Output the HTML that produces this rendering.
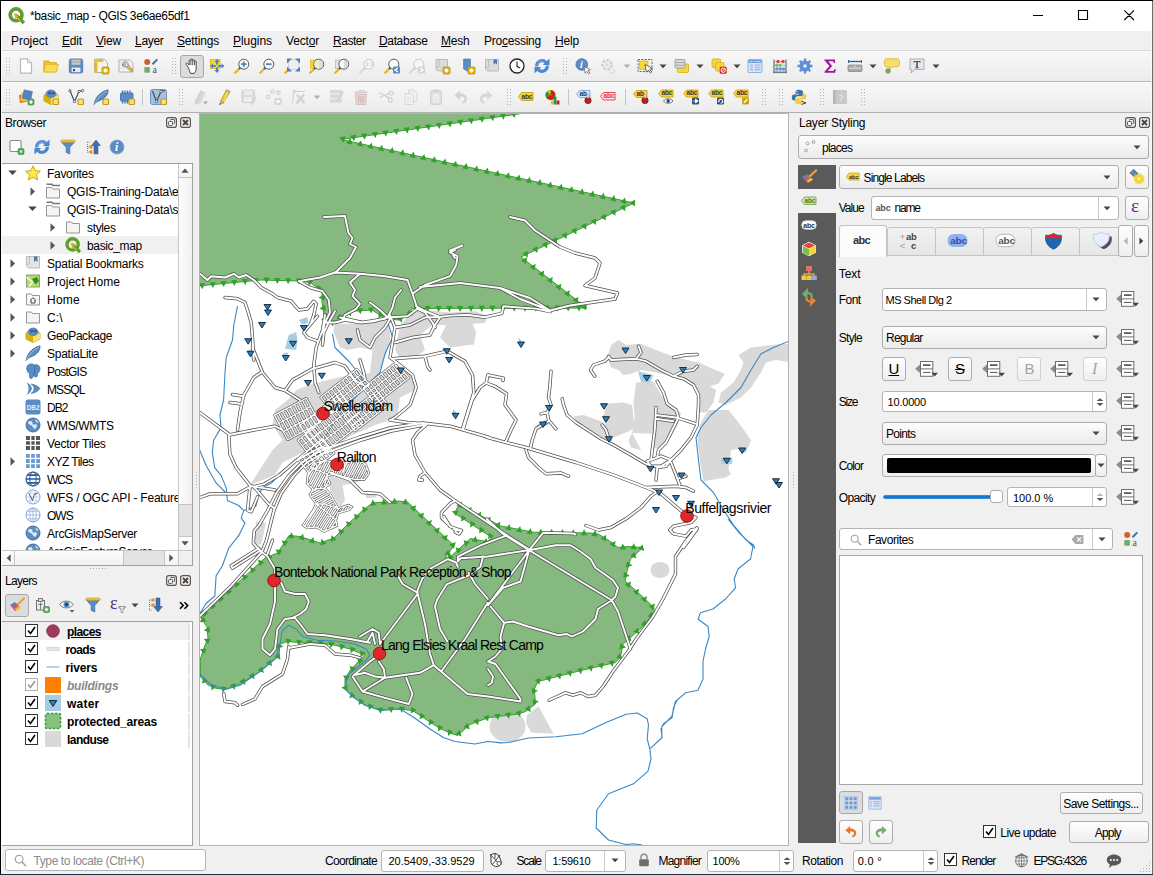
<!DOCTYPE html>
<html><head><meta charset="utf-8"><title>QGIS</title>
<style>
html,body{margin:0;padding:0}
body{width:1153px;height:875px;position:relative;overflow:hidden;background:#f0f0f0;font-family:"Liberation Sans",sans-serif;font-size:12px;color:#000}
div,svg{position:absolute;box-sizing:border-box}
.t{white-space:nowrap;line-height:16px;height:16px;font-size:12px;letter-spacing:-0.2px}
.i{overflow:visible}
u{text-decoration:underline;text-underline-offset:1px;text-decoration-skip-ink:none}
.grip{width:5px;background-image:radial-gradient(circle,#b0b0b0 0.7px,transparent 1px);background-size:3px 3px;background-position:0 0}
.btn{border:1px solid #adadad;border-radius:3px;background:linear-gradient(#fefefe,#eeeeee)}
.cmb{border:1px solid #adadad;border-radius:3px;background:linear-gradient(#fdfdfd,#ebebeb)}
.edit{border:1px solid #b4b4b4;border-radius:3px;background:#fff}
.cb{border:1px solid #333;background:#fff;width:13px;height:13px}

</style></head>
<body>
<div class="" style="left:0px;top:0px;width:1153px;height:31px;background:#fff"></div>
<svg class="i" style="left:8.0px;top:6.5px" width="17" height="17" viewBox="0 0 16 16"><circle cx="7.6" cy="7.4" r="5.6" fill="none" stroke="#5aa02c" stroke-width="3.4"/><path d="M8 8L15 15" stroke="#5aa02c" stroke-width="3.2"/><path d="M7 7l3.2 1.2L8.8 9.4l3 3-1 1-3-3L6.6 12z" fill="#f0a51f"/><circle cx="7.2" cy="7.2" r="1.6" fill="#ee7913" opacity=".6"/></svg>
<div class="t" style="left:30px;top:7.5px;;letter-spacing:-0.38px;">*basic_map - QGIS 3e6ae65df1</div>
<svg class="i" style="left:1020px;top:0" width="133" height="31" viewBox="0 0 133 31"><path d="M13 15.5h10M58.5 10.5h9v9h-9zM104.3 10.300l9.700 9.700M114 10.300l-9.700 9.700" stroke="#000" stroke-width="1.100" fill="none"/></svg>
<div class="" style="left:0px;top:31px;width:1153px;height:20px;background:#f0f0f0;border-bottom:1px solid #d9d9d9"></div>
<div class="t" style="left:11px;top:33px;;letter-spacing:-0.05px;">Pro<u>j</u>ect</div>
<div class="t" style="left:62px;top:33px;;letter-spacing:-0.17px;"><u>E</u>dit</div>
<div class="t" style="left:96px;top:33px;;letter-spacing:-0.20px;"><u>V</u>iew</div>
<div class="t" style="left:135px;top:33px;;letter-spacing:-0.30px;"><u>L</u>ayer</div>
<div class="t" style="left:177px;top:33px;;letter-spacing:-0.17px;"><u>S</u>ettings</div>
<div class="t" style="left:233px;top:33px;;letter-spacing:-0.05px;"><u>P</u>lugins</div>
<div class="t" style="left:286px;top:33px;;letter-spacing:-0.17px;">Vect<u>o</u>r</div>
<div class="t" style="left:333px;top:33px;;letter-spacing:-0.47px;"><u>R</u>aster</div>
<div class="t" style="left:379px;top:33px;;letter-spacing:-0.36px;"><u>D</u>atabase</div>
<div class="t" style="left:441px;top:33px;;letter-spacing:-0.21px;"><u>M</u>esh</div>
<div class="t" style="left:484px;top:33px;;letter-spacing:-0.24px;">Pro<u>c</u>essing</div>
<div class="t" style="left:555px;top:33px;;letter-spacing:-0.17px;"><u>H</u>elp</div>
<div class="" style="left:0px;top:51px;width:1153px;height:31px;background:linear-gradient(#f7f7f7,#ececec);border-top:1px solid #fbfbfb;border-bottom:1px solid #b8b8b8"></div>
<div class="" style="left:0px;top:82px;width:1153px;height:31px;background:linear-gradient(#f7f7f7,#ececec);border-top:1px solid #fbfbfb;border-bottom:1px solid #b0b0b0"></div>
<svg class="i" style="left:6px;top:58px" width="4" height="16" viewBox="0 0 4 16" fill="#b2b2b2"><rect x="0" y="0" width="1" height="1"/><rect x="0" y="3" width="1" height="1"/><rect x="0" y="6" width="1" height="1"/><rect x="0" y="9" width="1" height="1"/><rect x="0" y="12" width="1" height="1"/><rect x="0" y="15" width="1" height="1"/><rect x="3" y="0" width="1" height="1"/><rect x="3" y="3" width="1" height="1"/><rect x="3" y="6" width="1" height="1"/><rect x="3" y="9" width="1" height="1"/><rect x="3" y="12" width="1" height="1"/><rect x="3" y="15" width="1" height="1"/></svg>
<svg class="i" style="left:18.0px;top:58.0px" width="16" height="16" viewBox="0 0 16 16"><path d="M2.5 .8h7l4 4v10.4h-11z" fill="#fff" stroke="#b9b9b9" stroke-width="1.2" stroke-linejoin="round"/><path d="M9.5 .8v4h4" fill="#eee" stroke="#b9b9b9" stroke-width="1"/></svg>
<svg class="i" style="left:43.0px;top:58.0px" width="16" height="16" viewBox="0 0 16 16"><path d="M.8 3h5l1.2 1.6h6.4v9.2H.8z" fill="#efc52b" stroke="#d8ab18" stroke-width=".9"/><path d="M2.8 6.4h12.6l-2 7.6H.9z" fill="#fbdc5a" stroke="#e2b82a" stroke-width=".9" stroke-linejoin="round"/></svg>
<svg class="i" style="left:68.0px;top:58.0px" width="16" height="16" viewBox="0 0 16 16"><rect x="1.3" y="1" width="13.4" height="14" rx="1.8" fill="#5b8cc4" stroke="#4a7ab5" stroke-width=".9"/><rect x="3.6" y="1.6" width="8.8" height="5.2" fill="#c8c8c8"/><rect x="3.6" y="3.4" width="8.8" height="1.2" fill="#a9a9a9"/><rect x="3.6" y="9.6" width="8.8" height="4.6" fill="#ececec"/><rect x="5" y="11" width="2" height="2.2" fill="#2e4a73"/></svg>
<svg class="i" style="left:93.0px;top:58.0px" width="16" height="16" viewBox="0 0 16 16"><path d="M1.5 1h9.5l3.5 3.5V14.5h-13z" fill="#f4f4f4" stroke="#b0b0b0" stroke-width="1"/><path d="M1.5 1h3v13.5h-3z" fill="#eec52f"/><path d="M1.5 1h9v3h-9z" fill="#eec52f"/><path d="M2 6h1.5M2 8h1.5M2 10h1.5M2 12h1.5M6 1.5v1.5M8 1.5v1.5" stroke="#b08c0f" stroke-width=".6"/><rect x="9" y="9" width="7" height="7" rx="1" fill="#e3b51b" stroke="#b98f0c" stroke-width=".8"/><path d="M12.5 10.3v4.4M10.3 12.5h4.4M11 11l3 3M14 11l-3 3" stroke="#fff" stroke-width=".9"/></svg>
<svg class="i" style="left:118.0px;top:58.0px" width="16" height="16" viewBox="0 0 16 16"><path d="M1 2h11l3 3v9H1z" fill="#f2f4fa" stroke="#b0b0b0" stroke-width="1"/><rect x="2.5" y="4" width="9" height="7.5" fill="#dbe4f5"/><path d="M5.5 4.5c2-1.5 4.5-.5 4.3 2l5 5.5-1.6 1.8-5.2-5.4c-2 .6-3.8-.6-3.6-2.6l2 1.6 1.4-1.2z" fill="#e6c04a" stroke="#8a7a46" stroke-width=".7"/><path d="M5.5 4.5c2-1.5 4.5-.5 4.3 2l.8.8-1.8 1.6-.8-.5c-2 .6-3.8-.6-3.6-2.6l2 1.6 1.4-1.2z" fill="#e9e9e9" stroke="#777" stroke-width=".7"/></svg>
<svg class="i" style="left:143.0px;top:58.0px" width="16" height="16" viewBox="0 0 16 16"><circle cx="4.2" cy="4" r="3" fill="#d35f2f"/><rect x="1.3" y="9" width="5.6" height="5.8" rx=".8" fill="#6fae6c"/><path d="M9.5 6.2L14.3 1.4" stroke="#3c6fad" stroke-width="2"/><text x="9.6" y="14.6" font-family="Liberation Serif" font-size="10" fill="#555">a</text></svg>
<svg class="i" style="left:172px;top:58px" width="4" height="16" viewBox="0 0 4 16" fill="#b2b2b2"><rect x="0" y="0" width="1" height="1"/><rect x="0" y="3" width="1" height="1"/><rect x="0" y="6" width="1" height="1"/><rect x="0" y="9" width="1" height="1"/><rect x="0" y="12" width="1" height="1"/><rect x="0" y="15" width="1" height="1"/><rect x="3" y="0" width="1" height="1"/><rect x="3" y="3" width="1" height="1"/><rect x="3" y="6" width="1" height="1"/><rect x="3" y="9" width="1" height="1"/><rect x="3" y="12" width="1" height="1"/><rect x="3" y="15" width="1" height="1"/></svg>
<div class="" style="left:180px;top:55px;width:24px;height:23px;border:1px solid #a8a8a8;border-radius:3px;background:#dcdcdc"></div>
<svg class="i" style="left:184.0px;top:58.0px" width="16" height="16" viewBox="0 0 16 16"><path d="M4.2 9.2L2.2 6.6c-.8-1 .5-2 1.4-1.2l1.6 1.6V2.6c0-1.1 1.7-1.1 1.7 0V1.8c0-1.1 1.8-1.1 1.8 0v.9c0-1.1 1.8-1.1 1.8 0v1c0-1 1.7-1 1.7.1v6.4c0 3-1.2 4.6-2.2 5.2H6.6c-.8-1.8-1.6-4-2.4-6.2z" fill="#fff" stroke="#333" stroke-width=".9" stroke-linejoin="round"/><path d="M6.9 2.6v4.6M8.7 2.7v4.5M10.5 3.7v3.5" stroke="#333" stroke-width=".8"/></svg>
<svg class="i" style="left:209.0px;top:58.0px" width="16" height="16" viewBox="0 0 16 16"><rect x="1.5" y="1.5" width="9.5" height="9" fill="#f5d63d" stroke="#d6b41f" stroke-width=".8"/><path d="M8 1l2.6 3H5.4zM8 15l2.6-3H5.4zM1 8l3-2.6v5.2zM15.5 8l-3-2.6v5.2z" fill="#4f83c2"/><path d="M8 4v8M4 8h8.5" stroke="#4f83c2" stroke-width="2"/><circle cx="8" cy="8" r="1.4" fill="#f5d63d"/></svg>
<svg class="i" style="left:234.0px;top:58.0px" width="16" height="16" viewBox="0 0 16 16"><path d="M1.2 14.8L6 10" stroke="#e9b320" stroke-width="2.2" stroke-linecap="round"/><path d="M5 11L6.6 9.4" stroke="#555" stroke-width="2" /><circle cx="9.8" cy="6.2" r="5" fill="#fdfdfd" stroke="#555" stroke-width="1"/><path d="M9.8 3.4v5.6M7 6.2h5.6" stroke="#4a82c3" stroke-width="1.8"/></svg>
<svg class="i" style="left:259.0px;top:58.0px" width="16" height="16" viewBox="0 0 16 16"><path d="M1.2 14.8L6 10" stroke="#e9b320" stroke-width="2.2" stroke-linecap="round"/><path d="M5 11L6.6 9.4" stroke="#555" stroke-width="2" /><circle cx="9.8" cy="6.2" r="5" fill="#fdfdfd" stroke="#555" stroke-width="1"/><path d="M7 6.2h5.6" stroke="#4a82c3" stroke-width="1.9"/></svg>
<svg class="i" style="left:284.0px;top:58.0px" width="16" height="16" viewBox="0 0 16 16"><path d="M1.2 14.8L6 10" stroke="#e9b320" stroke-width="2.2" stroke-linecap="round"/><path d="M5 11L6.6 9.4" stroke="#555" stroke-width="2"/><rect x="4.5" y="1.5" width="10" height="10" fill="#eee" stroke="#bbb" stroke-width=".6"/><path d="M3 .5h5L3 5.5zM16 .5h-5l5 5zM16 13.5h-5l5-5zM3 13.5v-5l5 5z" fill="#4a82c3"/></svg>
<svg class="i" style="left:309.0px;top:58.0px" width="16" height="16" viewBox="0 0 16 16"><rect x="1.5" y="2" width="7" height="8.5" fill="#f5d63d" stroke="#d6b41f" stroke-width=".6"/><path d="M1.2 14.8L6 10" stroke="#e9b320" stroke-width="2.2" stroke-linecap="round"/><path d="M5 11L6.6 9.4" stroke="#555" stroke-width="2" /><circle cx="9.8" cy="6.2" r="5" fill="#fdfdfd" stroke="#555" stroke-width="1"/><path d="M9.8 1.7a4.5 4.5 0 0 1 0 9z" fill="#cfcfcf" opacity=".7"/><path d="M9.8 1.7a4.5 4.5 0 0 0 0 9z" fill="#f3ecc4"/></svg>
<svg class="i" style="left:334.0px;top:58.0px" width="16" height="16" viewBox="0 0 16 16"><rect x="1.5" y="2" width="6" height="8.5" fill="#e6e6e6" stroke="#aaa" stroke-width=".6"/><path d="M1.2 14.8L6 10" stroke="#e9b320" stroke-width="2.2" stroke-linecap="round"/><path d="M5 11L6.6 9.4" stroke="#555" stroke-width="2" /><circle cx="9.8" cy="6.2" r="5" fill="#fdfdfd" stroke="#555" stroke-width="1"/><path d="M9.8 1.7a4.5 4.5 0 0 1 0 9z" fill="#cfcfcf" opacity=".8"/></svg>
<svg class="i" style="left:359.0px;top:58.0px" width="16" height="16" viewBox="0 0 16 16"><path d="M1.2 14.8L6 10" stroke="#d8d8d8" stroke-width="2.2" stroke-linecap="round"/><path d="M5 11L6.6 9.4" stroke="#c9c9c9" stroke-width="2" /><circle cx="9.8" cy="6.2" r="5" fill="#f6f6f6" stroke="#c9c9c9" stroke-width="1"/><text x="6.6" y="8.2" font-family="Liberation Sans" font-size="5.5" fill="#ccc" font-weight="bold">1:1</text></svg>
<svg class="i" style="left:384.0px;top:58.0px" width="16" height="16" viewBox="0 0 16 16"><path d="M1.2 14.8L6 10" stroke="#e9b320" stroke-width="2.2" stroke-linecap="round"/><path d="M5 11L6.6 9.4" stroke="#555" stroke-width="2" /><circle cx="9.8" cy="6.2" r="5" fill="#fdfdfd" stroke="#555" stroke-width="1"/><rect x="9" y="8.5" width="7" height="7" rx="1" fill="#5b8cc4"/><path d="M14 10l-3 2 3 2" stroke="#fff" stroke-width="1.3" fill="none"/></svg>
<svg class="i" style="left:409.0px;top:58.0px" width="16" height="16" viewBox="0 0 16 16"><path d="M1.2 14.8L6 10" stroke="#d8d8d8" stroke-width="2.2" stroke-linecap="round"/><path d="M5 11L6.6 9.4" stroke="#c9c9c9" stroke-width="2" /><circle cx="9.8" cy="6.2" r="5" fill="#f6f6f6" stroke="#c9c9c9" stroke-width="1"/><rect x="9" y="8.5" width="7" height="7" rx="1" fill="#d4d4d4"/><path d="M11 10l3 2-3 2" stroke="#fff" stroke-width="1.3" fill="none"/></svg>
<svg class="i" style="left:434.0px;top:58.0px" width="16" height="16" viewBox="0 0 16 16"><path d="M2 1.5h11.5V13H5.5c-2 0-3.5-.8-3.5-2.5z" fill="#dcdcdc" stroke="#b4b4b4" stroke-width=".9"/><path d="M2 10.5c.3-1.2 1.5-1.5 3-1.5V1.5" fill="none" stroke="#b4b4b4" stroke-width=".8"/><rect x="9" y="9" width="7" height="7" rx="1" fill="#e3b51b" stroke="#b98f0c" stroke-width=".8"/><path d="M12.5 10.3v4.4M10.3 12.5h4.4M11 11l3 3M14 11l-3 3" stroke="#fff" stroke-width=".9"/></svg>
<svg class="i" style="left:459.0px;top:58.0px" width="16" height="16" viewBox="0 0 16 16"><path d="M4.5 1h7V11L9 13.5 4.5 11z" fill="#5b8cc4" stroke="#4a7ab5" stroke-width=".6"/><rect x="9" y="9" width="7" height="7" rx="1" fill="#e3b51b" stroke="#b98f0c" stroke-width=".8"/><path d="M12.5 10.3v4.4M10.3 12.5h4.4M11 11l3 3M14 11l-3 3" stroke="#fff" stroke-width=".9"/></svg>
<svg class="i" style="left:484.0px;top:58.0px" width="16" height="16" viewBox="0 0 16 16"><path d="M1.5 1.5h13V13H5c-2 0-3.5-.8-3.5-2.5z" fill="#dcdcdc" stroke="#b4b4b4" stroke-width=".9"/><path d="M1.5 10.5c.3-1.2 1.5-1.5 3-1.5V1.5" fill="none" stroke="#b4b4b4" stroke-width=".8"/><path d="M9.5 1.5h3.5v5l-1.75-1.4-1.75 1.4z" fill="#4a7ab5"/></svg>
<svg class="i" style="left:509.0px;top:58.0px" width="16" height="16" viewBox="0 0 16 16"><circle cx="8" cy="8" r="7" fill="#fff" stroke="#222" stroke-width="1.3"/><path d="M8 3.5V8.3l3 1.6" stroke="#222" stroke-width="1.1" fill="none"/></svg>
<svg class="i" style="left:534.0px;top:58.0px" width="16" height="16" viewBox="0 0 16 16"><path d="M2.700 8.300A5.300 5.300 0 0 1 11.800 4.300" fill="none" stroke="#4a86d0" stroke-width="3.200"/><path d="M8.800 6.900h6.700V.6z" fill="#4a86d0"/><path d="M13.300 7.700A5.300 5.300 0 0 1 4.200 11.700" fill="none" stroke="#4a86d0" stroke-width="3.200"/><path d="M7.200 9.100H.5v6.300z" fill="#4a86d0"/><path d="M3.500 7A4.500 4.500 0 0 1 10.500 3.800" fill="none" stroke="#8fb8ea" stroke-width=".8"/></svg>
<svg class="i" style="left:563px;top:58px" width="4" height="16" viewBox="0 0 4 16" fill="#b2b2b2"><rect x="0" y="0" width="1" height="1"/><rect x="0" y="3" width="1" height="1"/><rect x="0" y="6" width="1" height="1"/><rect x="0" y="9" width="1" height="1"/><rect x="0" y="12" width="1" height="1"/><rect x="0" y="15" width="1" height="1"/><rect x="3" y="0" width="1" height="1"/><rect x="3" y="3" width="1" height="1"/><rect x="3" y="6" width="1" height="1"/><rect x="3" y="9" width="1" height="1"/><rect x="3" y="12" width="1" height="1"/><rect x="3" y="15" width="1" height="1"/></svg>
<svg class="i" style="left:575.0px;top:58.0px" width="16" height="16" viewBox="0 0 16 16"><circle cx="6.8" cy="6.5" r="5.8" fill="#5b8cc4" stroke="#3f6eaa" stroke-width=".8"/><text x="5" y="10" font-family="Liberation Serif" font-style="italic" font-weight="bold" font-size="10" fill="#fff">i</text><path d="M9 8.5l6.5 3.2-2.4.9 1.8 2.4-1.2.9-1.8-2.5-1.7 1.8z" fill="#fff" stroke="#555" stroke-width=".7"/></svg>
<svg class="i" style="left:600.0px;top:58.0px" width="16" height="16" viewBox="0 0 16 16"><circle cx="7" cy="6.8" r="4.5" fill="none" stroke="#d0d0d0" stroke-width="2.6" stroke-dasharray="2.6 1.4"/><path d="M5.6 4.6v4.4l3.6-2.2z" fill="#d6d6d6"/><path d="M9.5 9.5l6 3-2.3.8 1.6 2.2-1 .8-1.7-2.3-1.5 1.6z" fill="#f4f4f4" stroke="#d0d0d0" stroke-width=".7"/></svg>
<svg class="i" style="left:637.0px;top:58.0px" width="16" height="16" viewBox="0 0 16 16"><rect x="1" y="1.5" width="14" height="12" fill="none" stroke="#666" stroke-width="1" stroke-dasharray="2 1.3"/><rect x="2.5" y="3" width="8.5" height="8.5" fill="#f5d63d" stroke="#d6b41f" stroke-width=".7"/><path d="M8 6.5l7.5 3.8-2.8 1 2 2.8-1.3 1-2-2.9-2 2z" fill="#fff" stroke="#444" stroke-width=".8"/></svg>
<svg class="i" style="left:674.0px;top:58.0px" width="16" height="16" viewBox="0 0 16 16"><rect x="3.5" y="6" width="11" height="8.5" rx="1" fill="#f5d63d" stroke="#d6b41f" stroke-width=".9"/><rect x="1" y="1.5" width="10" height="8.5" rx="1" fill="#d9d9d9" stroke="#9c9c9c" stroke-width=".9"/><path d="M1.5 4.5h9M1.5 7.2h9" stroke="#9c9c9c" stroke-width=".8"/></svg>
<svg class="i" style="left:711.0px;top:58.0px" width="16" height="16" viewBox="0 0 16 16"><rect x="1" y="1" width="8.5" height="8.5" rx="1" fill="#f5d63d" stroke="#d6b41f" stroke-width=".9"/><rect x="4.5" y="4.5" width="8.5" height="8.5" rx="1" fill="#f5d63d" stroke="#d6b41f" stroke-width=".9"/><rect x="8.7" y="8.7" width="7" height="7" rx="1.2" fill="#d9281e"/><circle cx="12.2" cy="12.2" r="2.2" fill="none" stroke="#fff" stroke-width="1"/><path d="M10.6 13.8l3.2-3.2" stroke="#fff" stroke-width="1"/></svg>
<svg class="i" style="left:747.0px;top:58.0px" width="16" height="16" viewBox="0 0 16 16"><rect x="1" y="1.5" width="14" height="13" rx="1" fill="#dbe7f7" stroke="#8fb1dc" stroke-width="1"/><rect x="1.5" y="2" width="13" height="3" fill="#6f9fd8"/><path d="M3 7h3M7.5 7h6M3 9.3h3M7.5 9.3h6M3 11.6h3M7.5 11.6h6" stroke="#8fb1dc" stroke-width="1.1"/><path d="M3 3.5h3M7.5 3.5h6" stroke="#c9dcf3" stroke-width=".9"/></svg>
<svg class="i" style="left:772.0px;top:58.0px" width="16" height="16" viewBox="0 0 16 16"><path d="M2 1.5V14M14 1.5V14" stroke="#777" stroke-width="1.3"/><path d="M1 14.3h14" stroke="#777" stroke-width="1.6"/><path d="M2 3.5h12M2 7.3h12M2 11h12" stroke="#999" stroke-width=".7"/><circle cx="6" cy="3.5" r="1.7" fill="#e04038"/><circle cx="11" cy="3.5" r="1.7" fill="#e04038"/><circle cx="4.8" cy="7.3" r="1.7" fill="#77c06c"/><circle cx="8" cy="7.3" r="1.7" fill="#77c06c"/><circle cx="5" cy="11" r="1.7" fill="#5b9bd5"/><circle cx="8.3" cy="11" r="1.7" fill="#5b9bd5"/><circle cx="11.5" cy="11" r="1.7" fill="#5b9bd5"/></svg>
<svg class="i" style="left:797.0px;top:58.0px" width="16" height="16" viewBox="0 0 16 16"><circle cx="8" cy="8" r="4" fill="none" stroke="#5b8fd6" stroke-width="3"/><path d="M8 .5v15M.5 8h15M2.7 2.7l10.6 10.6M13.3 2.7L2.7 13.3" stroke="#5b8fd6" stroke-width="2.3"/><circle cx="8" cy="8" r="3.6" fill="#5b8fd6"/><circle cx="8" cy="8" r="1.7" fill="#f4f4f4"/></svg>
<svg class="i" style="left:822.0px;top:58.0px" width="16" height="16" viewBox="0 0 16 16"><path d="M2.5 1.5h10.5v3.5h-1.2c-.2-1.3-.7-1.7-2-1.7H6.2l4 4.6-4.4 5h4.4c1.4 0 2-.5 2.3-2h1.2l-.5 3.8H2.5v-1l5-5.6-5-5.5z" fill="#a0169b"/></svg>
<svg class="i" style="left:847.0px;top:58.0px" width="16" height="16" viewBox="0 0 16 16"><rect x="1" y="7" width="14" height="6.5" rx="1" fill="#a8a8a8" stroke="#8a8a8a" stroke-width=".8"/><path d="M2 10.2h12" stroke="#d8d8d8" stroke-width="1.2"/><path d="M8 7v3" stroke="#d8d8d8" stroke-width="1"/><path d="M1.5 3.5h13" stroke="#2f5f96" stroke-width="1.3"/><path d="M1.5 2v3M14.5 2v3" stroke="#2f5f96" stroke-width="1"/></svg>
<svg class="i" style="left:884.0px;top:58.0px" width="16" height="16" viewBox="0 0 16 16"><path d="M3 .8h10c1.5 0 2.5 1 2.5 2.5v3c0 1.5-1 2.5-2.5 2.5H8.5L5 12.5 6 8.8H3C1.5 8.8.5 7.8.5 6.3v-3C.5 1.8 1.5.8 3 .8z" fill="#f7e06a" stroke="#d8b93a" stroke-width=".9"/><circle cx="4" cy="13" r="2.2" fill="#6bb06a" stroke="#7a7a3a" stroke-width=".8"/></svg>
<svg class="i" style="left:909.0px;top:58.0px" width="16" height="16" viewBox="0 0 16 16"><path d="M1 1h14v10.5H6L2 15l1-3.5H1z" fill="#e4e9ee" stroke="#a9b0b8" stroke-width="1"/><path d="M4.5 3h7v1.8h-.8l-.3-.8H8.8v5.2l1 .3v.7H6.2v-.7l1-.3V4H5.6l-.3.8h-.8z" fill="#555"/></svg>
<svg class="i" style="left:623px;top:64px" width="8" height="5" viewBox="0 0 8 5"><path d="M0.5 0.5h7L4 4.2z" fill="#b4b4b4"/></svg>
<svg class="i" style="left:659px;top:64px" width="8" height="5" viewBox="0 0 8 5"><path d="M0.5 0.5h7L4 4.2z" fill="#444"/></svg>
<svg class="i" style="left:696px;top:64px" width="8" height="5" viewBox="0 0 8 5"><path d="M0.5 0.5h7L4 4.2z" fill="#444"/></svg>
<svg class="i" style="left:733px;top:64px" width="8" height="5" viewBox="0 0 8 5"><path d="M0.5 0.5h7L4 4.2z" fill="#444"/></svg>
<svg class="i" style="left:869px;top:64px" width="8" height="5" viewBox="0 0 8 5"><path d="M0.5 0.5h7L4 4.2z" fill="#444"/></svg>
<svg class="i" style="left:932px;top:64px" width="8" height="5" viewBox="0 0 8 5"><path d="M0.5 0.5h7L4 4.2z" fill="#444"/></svg>
<svg class="i" style="left:6px;top:89px" width="4" height="16" viewBox="0 0 4 16" fill="#b2b2b2"><rect x="0" y="0" width="1" height="1"/><rect x="0" y="3" width="1" height="1"/><rect x="0" y="6" width="1" height="1"/><rect x="0" y="9" width="1" height="1"/><rect x="0" y="12" width="1" height="1"/><rect x="0" y="15" width="1" height="1"/><rect x="3" y="0" width="1" height="1"/><rect x="3" y="3" width="1" height="1"/><rect x="3" y="6" width="1" height="1"/><rect x="3" y="9" width="1" height="1"/><rect x="3" y="12" width="1" height="1"/><rect x="3" y="15" width="1" height="1"/></svg>
<svg class="i" style="left:18.0px;top:89.0px" width="16" height="16" viewBox="0 0 16 16"><path d="M1 6l8-1.5 1 8-8 1.5z" fill="#e0682d"/><path d="M3 3.5l8.5.5-.5 8.5-8.5-.5z" fill="#f2c72f"/><path d="M6 .8l8.5 1.7-1.7 8.5-8.5-1.7z" fill="#4f83c2" stroke="#3f6eaa" stroke-width=".5"/><rect x="10" y="10" width="6" height="6" rx="1.2" fill="#57a65a" stroke="#3d8842" stroke-width=".6"/><path d="M13 11.3v3.4M11.3 13h3.4" stroke="#fff" stroke-width="1.5"/></svg>
<svg class="i" style="left:43.0px;top:89.0px" width="16" height="16" viewBox="0 0 16 16"><path d="M1 6l7-3 7 3v6l-7 3.5L1 12z" fill="#f0cd2a" stroke="#b39412" stroke-width=".8" stroke-linejoin="round"/><path d="M1 6l7 3.2V15.5L1 12z" fill="#d8b00f"/><path d="M8 9.2L15 6v6l-7 3.5z" fill="#f7e36e"/><ellipse cx="8" cy="4.8" rx="5" ry="3.8" fill="#5b8cc4" stroke="#3f6eaa" stroke-width=".6"/><path d="M5 3.5l2-1 1.5 1.5 2-1.5 1.5 2-2 1-2-1-2 1.5z" fill="#2e5a94"/><rect x="10" y="10" width="5.5" height="5.5" rx="1" fill="#f3e08a" stroke="#c79a10" stroke-width="1.2"/></svg>
<svg class="i" style="left:68.0px;top:89.0px" width="16" height="16" viewBox="0 0 16 16"><path d="M2 1.8L6.5 12.5 11 2.5l3.5-1" fill="none" stroke="#34495e" stroke-width="1.1"/><circle cx="2" cy="1.8" r="1.2" fill="#fff" stroke="#34495e" stroke-width=".8"/><circle cx="6.5" cy="12.5" r="1.2" fill="#fff" stroke="#34495e" stroke-width=".8"/><circle cx="11" cy="2.5" r="1.2" fill="#fff" stroke="#34495e" stroke-width=".8"/><circle cx="14.5" cy="1.6" r="1.2" fill="#fff" stroke="#34495e" stroke-width=".8"/><rect x="10" y="10" width="5.5" height="5.5" rx="1" fill="#f3e08a" stroke="#c79a10" stroke-width="1.2"/></svg>
<svg class="i" style="left:93.0px;top:89.0px" width="16" height="16" viewBox="0 0 16 16"><path d="M1 15.5C2 10 6 3 15 .8c.5 3-1.5 7-5 9.2-3 1.8-6 2-7.5 4z" fill="#5b8cc4" stroke="#3a669c" stroke-width=".8"/><path d="M1.5 15C4 10 8 5 14 2" stroke="#a9c6ea" stroke-width=".8" fill="none"/><rect x="10" y="10" width="5.5" height="5.5" rx="1" fill="#f3e08a" stroke="#c79a10" stroke-width="1.2"/></svg>
<svg class="i" style="left:119.0px;top:89.0px" width="16" height="16" viewBox="0 0 16 16"><rect x="1.5" y="4" width="12.5" height="8" rx="1" fill="#5b8cc4" stroke="#3f6eaa" stroke-width=".8"/><path d="M3.5 1.5V4M6 1.5V4M8.5 1.5V4M11 1.5V4M3.5 12v2.5M6 12v2.5M8.5 12v2.5" stroke="#3f6eaa" stroke-width="1.3"/><rect x="10" y="10" width="5.5" height="5.5" rx="1" fill="#f3e08a" stroke="#c79a10" stroke-width="1.2"/></svg>
<svg class="i" style="left:150.0px;top:89.0px" width="16" height="16" viewBox="0 0 16 16"><rect x=".5" y=".5" width="16" height="15" rx="2" fill="#a9c0dc" stroke="#6f94c2" stroke-width="1"/><path d="M2.5 2L6.5 12.5 11 2.5l4-1" fill="none" stroke="#34495e" stroke-width="1.1"/><circle cx="6.5" cy="12.5" r="1.2" fill="#fff" stroke="#34495e" stroke-width=".8"/><circle cx="11" cy="2.5" r="1.2" fill="#fff" stroke="#34495e" stroke-width=".8"/><rect x="11" y="10" width="5.5" height="5.5" rx="1" fill="#f3e08a" stroke="#c79a10" stroke-width="1.2"/></svg>
<div class="" style="left:142px;top:89px;width:1px;height:16px;background:#c4c4c4"></div>
<svg class="i" style="left:179px;top:89px" width="4" height="16" viewBox="0 0 4 16" fill="#b2b2b2"><rect x="0" y="0" width="1" height="1"/><rect x="0" y="3" width="1" height="1"/><rect x="0" y="6" width="1" height="1"/><rect x="0" y="9" width="1" height="1"/><rect x="0" y="12" width="1" height="1"/><rect x="0" y="15" width="1" height="1"/><rect x="3" y="0" width="1" height="1"/><rect x="3" y="3" width="1" height="1"/><rect x="3" y="6" width="1" height="1"/><rect x="3" y="9" width="1" height="1"/><rect x="3" y="12" width="1" height="1"/><rect x="3" y="15" width="1" height="1"/></svg>
<svg class="i" style="left:192.0px;top:89.0px" width="16" height="16" viewBox="0 0 16 16"><path d="M8.5 1l3.5 1.5-6 12-3.5 1.5.5-4z" fill="#d6d2cc"/><path d="M11 2l3 1.5-5.5 11-3 1z" fill="#dedad4"/><path d="M11 12.5h5l-2.5 3z" fill="#a8a8a8"/></svg>
<svg class="i" style="left:216.0px;top:89.0px" width="16" height="16" viewBox="0 0 16 16"><path d="M10.5 .8l3.5 1.7-6.5 11.5L4.5 12.3z" fill="#e9cf2c" stroke="#a48d0f" stroke-width=".7"/><path d="M11.7 1.4L8.2 12.8" stroke="#f8ec8b" stroke-width="1"/><path d="M4.5 12.3L7.5 14 3.5 15.8z" fill="#d9c9a8" stroke="#777" stroke-width=".5"/><path d="M3.5 15.8l.5-1.7 1 .6z" fill="#333"/><path d="M10.5 .8l3.5 1.7-.7 1.2-3.5-1.7z" fill="#c9c9c9" stroke="#888" stroke-width=".5"/></svg>
<svg class="i" style="left:241.0px;top:89.0px" width="16" height="16" viewBox="0 0 16 16"><rect x="1" y="1" width="12.5" height="12.5" rx="1.5" fill="#dcdcdc" stroke="#cfcfcf" stroke-width=".9"/><rect x="3" y="1.5" width="8.5" height="4.5" fill="#ececec"/><rect x="3" y="8.5" width="8.5" height="4.5" fill="#efefef"/><path d="M13 7l2.5 1.2-4 7-2.5 1 .3-2.5z" fill="#d9d3cc"/></svg>
<svg class="i" style="left:266.0px;top:89.0px" width="16" height="16" viewBox="0 0 16 16"><circle cx="6.5" cy="2.5" r="1.7" fill="none" stroke="#cfcfcf" stroke-width="1.1"/><circle cx="12.5" cy="3.8" r="1.7" fill="none" stroke="#cfcfcf" stroke-width="1.1"/><circle cx="2.3" cy="7.8" r="1.7" fill="none" stroke="#cfcfcf" stroke-width="1.1"/><rect x="8.5" y="9" width="7" height="7" rx="1" fill="#d8d6cc"/><path d="M12 10.5v4M10 12.5h4M10.6 11.1l2.8 2.8M13.4 11.1l-2.8 2.8" stroke="#fff" stroke-width=".9"/></svg>
<svg class="i" style="left:291.0px;top:89.0px" width="16" height="16" viewBox="0 0 16 16"><path d="M3 2.5h11M3 2.5L1.5 14.5" stroke="#d2d2d2" stroke-width="1" fill="none"/><circle cx="3.2" cy="2.7" r="1.6" fill="#e4e4e4" stroke="#cfcfcf" stroke-width=".8"/><path d="M6 6l7.5 8M13 5.5L5.5 14.5" stroke="#d6d2c8" stroke-width="2.4"/></svg>
<svg class="i" style="left:329.0px;top:89.0px" width="16" height="16" viewBox="0 0 16 16"><rect x="1" y="1" width="12" height="3.6" rx=".8" fill="#dcd9d0"/><rect x="1" y="5.6" width="12" height="3.6" rx=".8" fill="#dcd9d0"/><rect x="1" y="10.2" width="12" height="3.6" rx=".8" fill="#dcd9d0"/><path d="M12.5 1.5L15 2.7 9.5 13l-2.7 1.2.3-2.8z" fill="#d4d0c8" stroke="#e9e9e9" stroke-width=".6"/></svg>
<svg class="i" style="left:353.0px;top:89.0px" width="16" height="16" viewBox="0 0 16 16"><rect x="1.5" y="2.5" width="13" height="2" fill="#dcc9c9"/><rect x="5.5" y=".8" width="6" height="2" fill="#d8d8d8"/><path d="M2.5 5.5h11l-.8 10H3.3z" fill="#e6d5d5" stroke="#d7bcbc" stroke-width=".9"/><path d="M5.8 7v7M8 7v7M10.2 7v7" stroke="#d2b4b4" stroke-width="1.1"/></svg>
<svg class="i" style="left:378.0px;top:89.0px" width="16" height="16" viewBox="0 0 16 16"><path d="M1 3.5l10.5 5.5M1.5 8.5L12 4" stroke="#cfcfcf" stroke-width="1.2"/><ellipse cx="13" cy="4.2" rx="2.2" ry="1.8" fill="none" stroke="#cfcfcf" stroke-width="1.1"/><ellipse cx="12.3" cy="11" rx="1.8" ry="2.3" fill="none" stroke="#cfcfcf" stroke-width="1.1"/><path d="M9 8l2.6 1.4" stroke="#cfcfcf" stroke-width="1.4"/></svg>
<svg class="i" style="left:403.0px;top:89.0px" width="16" height="16" viewBox="0 0 16 16"><path d="M5.5 1h5.5l3 3v8.5H5.5z" fill="#efefef" stroke="#d6d6d6" stroke-width=".9"/><path d="M2 4.5h5.5l3 3V15.5H2z" fill="#f1f1f1" stroke="#d6d6d6" stroke-width=".9"/><path d="M4 9h4M4 11h4M4 13h4" stroke="#dedede" stroke-width=".9"/></svg>
<svg class="i" style="left:428.0px;top:89.0px" width="16" height="16" viewBox="0 0 16 16"><rect x="2.5" y="1.5" width="11" height="14" rx="1.2" fill="#e0ddd8" stroke="#d4d0ca" stroke-width=".9"/><rect x="5.5" y=".5" width="5" height="2.4" rx=".8" fill="#d0d0d0"/><path d="M4.5 4.5h5l2 2V14h-7z" fill="#f1f1f1" stroke="#dcdcdc" stroke-width=".7"/><path d="M6 8h3.5M6 10h3.5M6 12h3.5" stroke="#dcdcdc" stroke-width=".8"/></svg>
<svg class="i" style="left:453.0px;top:89.0px" width="16" height="16" viewBox="0 0 16 16"><path d="M1.5 6.5L7 1.5v3c4 0 7 2 7 5.5 0 2.5-1.8 4.3-4.5 4.8v-2.6c1.3-.4 2-1.2 2-2.3 0-1.6-1.5-2.4-4.5-2.4v3.5z" fill="#ddd0cc"/></svg>
<svg class="i" style="left:478.0px;top:89.0px" width="16" height="16" viewBox="0 0 16 16"><path d="M14.5 6.5L9 1.5v3c-4 0-7 2-7 5.5 0 2.5 1.8 4.3 4.5 4.8v-2.6c-1.3-.4-2-1.2-2-2.3 0-1.6 1.5-2.4 4.5-2.4v3.5z" fill="#d3d8d2"/></svg>
<svg class="i" style="left:313px;top:95px" width="8" height="5" viewBox="0 0 8 5"><path d="M0.5 0.5h7L4 4.2z" fill="#b4b4b4"/></svg>
<svg class="i" style="left:507px;top:89px" width="4" height="16" viewBox="0 0 4 16" fill="#b2b2b2"><rect x="0" y="0" width="1" height="1"/><rect x="0" y="3" width="1" height="1"/><rect x="0" y="6" width="1" height="1"/><rect x="0" y="9" width="1" height="1"/><rect x="0" y="12" width="1" height="1"/><rect x="0" y="15" width="1" height="1"/><rect x="3" y="0" width="1" height="1"/><rect x="3" y="3" width="1" height="1"/><rect x="3" y="6" width="1" height="1"/><rect x="3" y="9" width="1" height="1"/><rect x="3" y="12" width="1" height="1"/><rect x="3" y="15" width="1" height="1"/></svg>
<svg class="i" style="left:518.0px;top:89.0px" width="16" height="16" viewBox="0 0 16 16"><path d="M0.5 7.5L3.5 3.5H15.0V11.5H3.5Z" fill="#f5d63d" stroke="#c8a21a" stroke-width=".9" stroke-linejoin="round"/><text x="3.5" y="9.9" font-family="Liberation Sans" font-weight="bold" font-size="6.6" fill="#333" letter-spacing="-.2">abc</text></svg>
<svg class="i" style="left:544.0px;top:89.0px" width="16" height="16" viewBox="0 0 16 16"><circle cx="6.5" cy="6" r="5" fill="#e9b91c"/><path d="M6.5 6V1a5 5 0 0 1 4.7 6.7z" fill="#c0221c"/><path d="M6.5 6l4.7 1.7A5 5 0 0 1 2 8.2z" fill="#c0221c"/><path d="M6.5 6L2 8.2A5 5 0 0 1 3.2 2.3z" fill="#1f9a3e"/><path d="M6.5 6L3.2 2.3A5 5 0 0 1 6.5 1z" fill="#e9b91c"/><rect x="7" y="11.5" width="2.6" height="4" fill="#e9b91c"/><rect x="9.8" y="7.5" width="2.6" height="8" fill="#1f9a3e"/><rect x="12.6" y="11.5" width="2.8" height="4" fill="#c0221c"/></svg>
<svg class="i" style="left:576.0px;top:89.0px" width="16" height="16" viewBox="0 0 16 16"><path d="M0.5 5.0L3.5 1.5H14.0V8.5H3.5Z" fill="#dbe8fb" stroke="#77a5e6" stroke-width=".9" stroke-linejoin="round"/><text x="3.5" y="6.9" font-family="Liberation Sans" font-weight="bold" font-size="6.6" fill="#333" letter-spacing="-.2">ab</text><circle cx="12" cy="11.5" r="3.2" fill="#b22127" stroke="#7e1016" stroke-width=".6"/><rect x="11" y="5" width="2" height="4" fill="#ddd" stroke="#999" stroke-width=".5"/></svg>
<svg class="i" style="left:600.0px;top:89.0px" width="16" height="16" viewBox="0 0 16 16"><path d="M0.5 7.25L3.5 3.5H15.0V11.0H3.5Z" fill="#fde7e7" stroke="#e8323a" stroke-width=".9" stroke-linejoin="round"/><text x="3.5" y="9.4" font-family="Liberation Sans" font-weight="bold" font-size="6.6" fill="#e8323a" letter-spacing="-.2">abc</text></svg>
<svg class="i" style="left:633.0px;top:89.0px" width="16" height="16" viewBox="0 0 16 16"><path d="M0.5 5.0L3.5 1.5H14.0V8.5H3.5Z" fill="#f5d63d" stroke="#c8a21a" stroke-width=".9" stroke-linejoin="round"/><text x="3.5" y="6.9" font-family="Liberation Sans" font-weight="bold" font-size="6.6" fill="#333" letter-spacing="-.2">ab</text><circle cx="12" cy="11.5" r="3.2" fill="#b22127" stroke="#7e1016" stroke-width=".6"/><rect x="11" y="5" width="2" height="4" fill="#ddd" stroke="#999" stroke-width=".5"/></svg>
<svg class="i" style="left:658.0px;top:89.0px" width="16" height="16" viewBox="0 0 16 16"><path d="M0.5 4.5L3.5 1H15.0V8H3.5Z" fill="#f5d63d" stroke="#c8a21a" stroke-width=".9" stroke-linejoin="round"/><text x="3.5" y="6.4" font-family="Liberation Sans" font-weight="bold" font-size="6.6" fill="#333" letter-spacing="-.2">abc</text><path d="M5.5 12c2-3 7-3 9.5 0-2.5 3-7.5 3-9.5 0z" fill="#fff" stroke="#555" stroke-width=".8"/><circle cx="10.2" cy="12" r="1.9" fill="#3b74b8"/><circle cx="10.2" cy="12" r=".8" fill="#111"/></svg>
<svg class="i" style="left:683.0px;top:89.0px" width="16" height="16" viewBox="0 0 16 16"><path d="M0.5 4.5L3.5 1H15.0V8H3.5Z" fill="#f5d63d" stroke="#c8a21a" stroke-width=".9" stroke-linejoin="round"/><text x="3.5" y="6.4" font-family="Liberation Sans" font-weight="bold" font-size="6.6" fill="#333" letter-spacing="-.2">abc</text><rect x="9" y="8.5" width="7" height="7" rx="1.2" fill="#34566f"/><path d="M10.3 12h2.2v-1.9l2.7 1.9-2.7 1.9V12" fill="#fff" stroke="#fff" stroke-width=".9"/></svg>
<svg class="i" style="left:708.0px;top:89.0px" width="16" height="16" viewBox="0 0 16 16"><path d="M0.5 4.5L3.5 1H15.0V8H3.5Z" fill="#f5d63d" stroke="#c8a21a" stroke-width=".9" stroke-linejoin="round"/><text x="3.5" y="6.4" font-family="Liberation Sans" font-weight="bold" font-size="6.6" fill="#333" letter-spacing="-.2">abc</text><rect x="9" y="8.5" width="7" height="7" rx="1.2" fill="#34566f"/><path d="M10.7 12.5a2 2 0 1 1 2 1.8" fill="none" stroke="#fff" stroke-width="1.1"/><path d="M9.7 12l1.2 1.6 1-1.7z" fill="#fff"/></svg>
<svg class="i" style="left:733.0px;top:89.0px" width="16" height="16" viewBox="0 0 16 16"><path d="M0.5 4.5L3.5 1H15.0V8H3.5Z" fill="#f5d63d" stroke="#c8a21a" stroke-width=".9" stroke-linejoin="round"/><text x="3.5" y="6.4" font-family="Liberation Sans" font-weight="bold" font-size="6.6" fill="#333" letter-spacing="-.2">abc</text><rect x="9" y="8.5" width="7" height="7" rx="1.2" fill="#c9a20c"/><path d="M10.5 14.2l.4-1.5 3-3 1 1-3 3z" fill="#fff"/></svg>
<div class="" style="left:568px;top:89px;width:1px;height:16px;background:#c4c4c4"></div>
<div class="" style="left:625px;top:89px;width:1px;height:16px;background:#c4c4c4"></div>
<svg class="i" style="left:762px;top:89px" width="4" height="16" viewBox="0 0 4 16" fill="#b2b2b2"><rect x="0" y="0" width="1" height="1"/><rect x="0" y="3" width="1" height="1"/><rect x="0" y="6" width="1" height="1"/><rect x="0" y="9" width="1" height="1"/><rect x="0" y="12" width="1" height="1"/><rect x="0" y="15" width="1" height="1"/><rect x="3" y="0" width="1" height="1"/><rect x="3" y="3" width="1" height="1"/><rect x="3" y="6" width="1" height="1"/><rect x="3" y="9" width="1" height="1"/><rect x="3" y="12" width="1" height="1"/><rect x="3" y="15" width="1" height="1"/></svg>
<svg class="i" style="left:779px;top:89px" width="4" height="16" viewBox="0 0 4 16" fill="#b2b2b2"><rect x="0" y="0" width="1" height="1"/><rect x="0" y="3" width="1" height="1"/><rect x="0" y="6" width="1" height="1"/><rect x="0" y="9" width="1" height="1"/><rect x="0" y="12" width="1" height="1"/><rect x="0" y="15" width="1" height="1"/><rect x="3" y="0" width="1" height="1"/><rect x="3" y="3" width="1" height="1"/><rect x="3" y="6" width="1" height="1"/><rect x="3" y="9" width="1" height="1"/><rect x="3" y="12" width="1" height="1"/><rect x="3" y="15" width="1" height="1"/></svg>
<svg class="i" style="left:791.0px;top:89.0px" width="16" height="16" viewBox="0 0 16 16"><path d="M7.8.8c-3 0-3.3 1.3-3.3 2.2v1.8H8v.7H3C1.5 5.5.8 6.8.8 8.5s.8 3 2.2 3h1.3V9.6c0-1.3 1-2.3 2.3-2.3h3.5c1 0 1.9-.8 1.9-1.9V3c0-1.2-1.2-2.2-4.2-2.2z" fill="#3a73a8"/><circle cx="6" cy="2.6" r=".7" fill="#fff"/><path d="M8.2 15.2c3 0 3.3-1.3 3.3-2.2v-1.8H8v-.7h5c1.5 0 2.2-1.3 2.2-3s-.8-3-2.2-3h-1.3v1.9c0 1.3-1 2.3-2.3 2.3H5.9c-1 0-1.9.8-1.9 1.9V13c0 1.2 1.2 2.2 4.2 2.2z" fill="#f7cc40"/><path d="M10.5 12.3l4.5 1.6-4.5 1.6" fill="none" stroke="#333" stroke-width=".9"/></svg>
<svg class="i" style="left:820px;top:89px" width="4" height="16" viewBox="0 0 4 16" fill="#b2b2b2"><rect x="0" y="0" width="1" height="1"/><rect x="0" y="3" width="1" height="1"/><rect x="0" y="6" width="1" height="1"/><rect x="0" y="9" width="1" height="1"/><rect x="0" y="12" width="1" height="1"/><rect x="0" y="15" width="1" height="1"/><rect x="3" y="0" width="1" height="1"/><rect x="3" y="3" width="1" height="1"/><rect x="3" y="6" width="1" height="1"/><rect x="3" y="9" width="1" height="1"/><rect x="3" y="12" width="1" height="1"/><rect x="3" y="15" width="1" height="1"/></svg>
<svg class="i" style="left:832.0px;top:89.0px" width="16" height="16" viewBox="0 0 16 16"><rect x="1" y="1" width="14" height="14" rx="1" fill="#c9c9c9"/><rect x="1" y="1" width="2.5" height="14" fill="#b5b5b5"/><text x="6.3" y="11.5" font-family="Liberation Sans" font-weight="bold" font-size="9" fill="#e4e4e4">?</text></svg>
<svg class="i" style="left:861px;top:89px" width="4" height="16" viewBox="0 0 4 16" fill="#b2b2b2"><rect x="0" y="0" width="1" height="1"/><rect x="0" y="3" width="1" height="1"/><rect x="0" y="6" width="1" height="1"/><rect x="0" y="9" width="1" height="1"/><rect x="0" y="12" width="1" height="1"/><rect x="0" y="15" width="1" height="1"/><rect x="3" y="0" width="1" height="1"/><rect x="3" y="3" width="1" height="1"/><rect x="3" y="6" width="1" height="1"/><rect x="3" y="9" width="1" height="1"/><rect x="3" y="12" width="1" height="1"/><rect x="3" y="15" width="1" height="1"/></svg>
<div class="t" style="left:5px;top:115px;;letter-spacing:-0.43px;">Browser</div>
<svg class="i" style="left:166px;top:117px" width="25" height="11" viewBox="0 0 25 11" fill="none" stroke="#5c5752"><rect x="0.600" y="0.600" width="9.800" height="9.800" rx="2.200" stroke-width="1.200"/><path d="M4.500 3.500v-0.400a0.600 0.600 0 0 1 0.600-0.600h2.800a0.600 0.600 0 0 1 0.600 0.600v2.800a0.600 0.600 0 0 1-0.600 0.600h-0.400" stroke-width="1"/><rect x="2.500" y="4.500" width="4" height="4" rx="0.900" stroke-width="1" fill="#f6f6f6"/><rect x="14.600" y="0.600" width="9.800" height="9.800" rx="2.200" stroke-width="1.200"/><path d="M17 3l5 5M22 3l-5 5" stroke-width="1.900" stroke="#4a4540"/></svg>
<svg class="i" style="left:9.0px;top:139.0px" width="16" height="16" viewBox="0 0 16 16"><rect x="1" y="1.5" width="11" height="11" rx="1" fill="#fff" stroke="#888" stroke-width="1.1"/><rect x="9" y="9.5" width="6" height="6" rx="1.2" fill="#57a65a" stroke="#3d8842" stroke-width=".6"/><circle cx="12" cy="12.5" r="1.3" fill="#d9efd9"/></svg>
<svg class="i" style="left:34.0px;top:139.0px" width="16" height="16" viewBox="0 0 16 16"><path d="M2.700 8.300A5.300 5.300 0 0 1 11.800 4.300" fill="none" stroke="#4a86d0" stroke-width="3.200"/><path d="M8.800 6.900h6.700V.6z" fill="#4a86d0"/><path d="M13.300 7.700A5.300 5.300 0 0 1 4.200 11.700" fill="none" stroke="#4a86d0" stroke-width="3.200"/><path d="M7.200 9.100H.5v6.300z" fill="#4a86d0"/><path d="M3.500 7A4.500 4.500 0 0 1 10.500 3.800" fill="none" stroke="#8fb8ea" stroke-width=".8"/></svg>
<svg class="i" style="left:59.5px;top:139.0px" width="16" height="16" viewBox="0 0 16 16"><path d="M1 2.5h14L9.8 8.5V15l-3.6-1.5V8.5z" fill="#5b8cc4" stroke="#3f6eaa" stroke-width=".7"/><rect x="1" y="1" width="14" height="2.2" rx=".8" fill="#efc52b" stroke="#c79a10" stroke-width=".5"/></svg>
<svg class="i" style="left:84.5px;top:139.0px" width="16" height="16" viewBox="0 0 16 16"><path d="M2.5 3v10.5M2.5 3H5M2.5 8H5M2.5 13H5" stroke="#777" stroke-width=".9" stroke-dasharray="1 1" fill="none"/><rect x="4.5" y="6.5" width="3" height="3" fill="#ee8a22"/><rect x="4.5" y="11.5" width="3" height="3" fill="#ee8a22"/><path d="M11 1l4.5 5.5H13V15H9V6.5H6.5z" fill="#3c6fad" stroke="#2d578c" stroke-width=".5"/></svg>
<svg class="i" style="left:109.0px;top:139.0px" width="16" height="16" viewBox="0 0 16 16"><circle cx="8" cy="8" r="7" fill="#5b8cc4" stroke="#7aa3d6" stroke-width=".8"/><text x="6" y="12.3" font-family="Liberation Serif" font-style="italic" font-weight="bold" font-size="11.5" fill="#fff">i</text></svg>
<div class="" style="left:1px;top:163px;width:192px;height:403px;background:#fff;border:1px solid #a0a0a0"></div>
<div class="" style="left:2px;top:236px;width:176px;height:18px;background:#f0f0f0"></div>
<div style="left:2px;top:164px;width:176px;height:386px;overflow:hidden">
<svg class="i" style="left:6px;top:6px" width="9" height="6" viewBox="0 0 9 6"><path d="M0.3 0.5h8.4L4.5 5z" fill="#444"/></svg>
<svg class="i" style="left:23.0px;top:1.0px" width="16" height="16" viewBox="0 0 16 16"><path d="M8 .8l2.2 4.8 5.2.6-3.9 3.5 1.1 5.2L8 12.3 3.4 14.9l1.1-5.2L.6 6.2l5.2-.6z" fill="#fce94f" stroke="#c4a000" stroke-width=".9" stroke-linejoin="round"/></svg>
<div class="t" style="left:45px;top:2px;;letter-spacing:-0.30px;">Favorites</div>
<svg class="i" style="left:28px;top:23px" width="6" height="9" viewBox="0 0 6 9"><path d="M0.5 0.3L5 4.5L0.5 8.7z" fill="#555"/></svg>
<svg class="i" style="left:43.0px;top:19.0px" width="16" height="16" viewBox="0 0 16 16"><path d="M1.5 1.2h5.5l1 1.3h7" fill="none" stroke="#777" stroke-width="1.6"/><path d="M1.5 4.5h5l1 1.5h7V15h-13z" fill="#f4f4f4" stroke="#8a8a8a" stroke-width=".9" stroke-linejoin="round"/></svg>
<div class="t" style="left:65px;top:20px;;letter-spacing:-0.24px;">QGIS-Training-Data\e</div>
<svg class="i" style="left:26px;top:42px" width="9" height="6" viewBox="0 0 9 6"><path d="M0.3 0.5h8.4L4.5 5z" fill="#444"/></svg>
<svg class="i" style="left:43.0px;top:37.0px" width="16" height="16" viewBox="0 0 16 16"><path d="M1.5 1.2h5.5l1 1.3h7" fill="none" stroke="#777" stroke-width="1.6"/><path d="M1.5 4.5h5l1 1.5h7V15h-13z" fill="#f4f4f4" stroke="#8a8a8a" stroke-width=".9" stroke-linejoin="round"/></svg>
<div class="t" style="left:65px;top:38px;;letter-spacing:-0.21px;">QGIS-Training-Data\s</div>
<svg class="i" style="left:48px;top:59px" width="6" height="9" viewBox="0 0 6 9"><path d="M0.5 0.3L5 4.5L0.5 8.7z" fill="#555"/></svg>
<svg class="i" style="left:63.0px;top:55.0px" width="16" height="16" viewBox="0 0 16 16"><path d="M1.5 3h5l1 1.5h7V14h-13z" fill="#f4f4f4" stroke="#8a8a8a" stroke-width=".9" stroke-linejoin="round"/></svg>
<div class="t" style="left:85px;top:56px;;letter-spacing:-0.35px;">styles</div>
<svg class="i" style="left:48px;top:77px" width="6" height="9" viewBox="0 0 6 9"><path d="M0.5 0.3L5 4.5L0.5 8.7z" fill="#555"/></svg>
<svg class="i" style="left:63.0px;top:73.0px" width="16" height="16" viewBox="0 0 16 16"><circle cx="7.6" cy="7.4" r="5.6" fill="none" stroke="#5aa02c" stroke-width="3.4"/><path d="M8 8L15 15" stroke="#5aa02c" stroke-width="3.2"/><path d="M7 7l3.2 1.2L8.8 9.4l3 3-1 1-3-3L6.6 12z" fill="#f0a51f"/><circle cx="7.2" cy="7.2" r="1.6" fill="#ee7913" opacity=".6"/></svg>
<div class="t" style="left:85px;top:74px;;letter-spacing:-0.35px;">basic_map</div>
<svg class="i" style="left:8px;top:95px" width="6" height="9" viewBox="0 0 6 9"><path d="M0.5 0.3L5 4.5L0.5 8.7z" fill="#555"/></svg>
<svg class="i" style="left:23.0px;top:91.0px" width="16" height="16" viewBox="0 0 16 16"><path d="M1.5 1.5h13V13H5c-2 0-3.5-.8-3.5-2.5z" fill="#e4e4e4" stroke="#b4b4b4" stroke-width=".9"/><path d="M1.5 10.5c.3-1.2 1.5-1.5 3-1.5V1.5" fill="none" stroke="#b4b4b4" stroke-width=".8"/><path d="M9 1.5h3.5v5.5l-1.75-1.4-1.75 1.4z" fill="#4a7ab5"/></svg>
<div class="t" style="left:45px;top:92px;;letter-spacing:-0.20px;">Spatial Bookmarks</div>
<svg class="i" style="left:8px;top:113px" width="6" height="9" viewBox="0 0 6 9"><path d="M0.5 0.3L5 4.5L0.5 8.7z" fill="#555"/></svg>
<svg class="i" style="left:23.0px;top:109.0px" width="16" height="16" viewBox="0 0 16 16"><rect x="1.5" y="2" width="13" height="12" fill="#b4e05a" stroke="#8a8a8a" stroke-width=".9"/><path d="M1.5 4l6 5-3.5 5" fill="none" stroke="#fff" stroke-width="1.2"/><path d="M7 6l5-2 2 4-3.5 3.5z" fill="#2e8b2e"/></svg>
<div class="t" style="left:45px;top:110px;;letter-spacing:0.02px;">Project Home</div>
<svg class="i" style="left:8px;top:131px" width="6" height="9" viewBox="0 0 6 9"><path d="M0.5 0.3L5 4.5L0.5 8.7z" fill="#555"/></svg>
<svg class="i" style="left:23.0px;top:127.0px" width="16" height="16" viewBox="0 0 16 16"><path d="M1.5 3h5l1 1.5h7V14h-13z" fill="#f8f8f8" stroke="#8a8a8a" stroke-width=".9" stroke-linejoin="round"/><path d="M5 9.5l3-2.8 3 2.8M6 9v3h4V9" fill="none" stroke="#333" stroke-width=".9"/></svg>
<div class="t" style="left:45px;top:128px;;letter-spacing:0.22px;">Home</div>
<svg class="i" style="left:8px;top:149px" width="6" height="9" viewBox="0 0 6 9"><path d="M0.5 0.3L5 4.5L0.5 8.7z" fill="#555"/></svg>
<svg class="i" style="left:23.0px;top:145.0px" width="16" height="16" viewBox="0 0 16 16"><path d="M1.5 3h5l1 1.5h7V14h-13z" fill="#f4f4f4" stroke="#8a8a8a" stroke-width=".9" stroke-linejoin="round"/></svg>
<div class="t" style="left:45px;top:146px;;letter-spacing:0.12px;">C:\</div>
<svg class="i" style="left:8px;top:167px" width="6" height="9" viewBox="0 0 6 9"><path d="M0.5 0.3L5 4.5L0.5 8.7z" fill="#555"/></svg>
<svg class="i" style="left:23.0px;top:163.0px" width="16" height="16" viewBox="0 0 16 16"><path d="M1 6l7-3 7 3v6l-7 3.5L1 12z" fill="#f0cd2a" stroke="#b39412" stroke-width=".8" stroke-linejoin="round"/><path d="M1 6l7 3.2V15.5L1 12z" fill="#d8b00f"/><path d="M8 9.2L15 6v6l-7 3.5z" fill="#f7e36e"/><ellipse cx="8" cy="4.8" rx="5" ry="3.8" fill="#5b8cc4" stroke="#3f6eaa" stroke-width=".6"/><path d="M5 3.5l2-1 1.5 1.5 2-1.5 1.5 2-2 1-2-1-2 1.5z" fill="#2e5a94"/></svg>
<div class="t" style="left:45px;top:164px;;letter-spacing:-0.45px;">GeoPackage</div>
<svg class="i" style="left:8px;top:185px" width="6" height="9" viewBox="0 0 6 9"><path d="M0.5 0.3L5 4.5L0.5 8.7z" fill="#555"/></svg>
<svg class="i" style="left:23.0px;top:181.0px" width="16" height="16" viewBox="0 0 16 16"><path d="M1 15.5C2 10 6 3 15 .8c.5 3-1.5 7-5 9.2-3 1.8-6 2-7.5 4z" fill="#5b8cc4" stroke="#3a669c" stroke-width=".8"/><path d="M1.5 15C4 10 8 5 14 2" stroke="#a9c6ea" stroke-width=".8" fill="none"/></svg>
<div class="t" style="left:45px;top:182px;;letter-spacing:-0.25px;">SpatiaLite</div>
<svg class="i" style="left:23.0px;top:199.0px" width="16" height="16" viewBox="0 0 16 16"><path d="M3 2c2-1.5 5-1.5 6.5 0 2-1 5 0 5.5 3 .3 2.5-1.5 5-2.5 5.5 0 2 .5 3-1.5 3.5-1.5.3-2-1-2-2.5-1.5 2.5-1 4-3 4-1.5 0-1.5-2.5-1.5-5C2 9 .5 5 3 2z" fill="#5b8cc4" stroke="#3a669c" stroke-width=".7"/><path d="M9.5 2c.5 3 0 6-.5 9.5" stroke="#2e5a94" stroke-width=".7" fill="none"/></svg>
<div class="t" style="left:45px;top:200px;;letter-spacing:-0.75px;">PostGIS</div>
<svg class="i" style="left:23.0px;top:217.0px" width="16" height="16" viewBox="0 0 16 16"><path d="M1.5 1.5c3 1 5 3 5.5 6-.5 3-2.5 5-5.5 6.5 1.5-2 2-4 2-6.5s-.5-4-2-6z" fill="#5b8cc4"/><path d="M6 3c4 .5 7 2 9 4.5-2 3-5 4.5-9 5 2-1.5 3-3 3-5S8 4.5 6 3z" fill="#5b8cc4" stroke="#3a669c" stroke-width=".5"/></svg>
<div class="t" style="left:45px;top:218px;;letter-spacing:-0.92px;">MSSQL</div>
<svg class="i" style="left:23.0px;top:235.0px" width="16" height="16" viewBox="0 0 16 16"><rect x=".5" y=".5" width="15" height="15" rx="2.5" fill="#5b8cc4"/><text x="1.7" y="10.6" font-family="Liberation Sans" font-size="6.4" font-weight="bold" fill="#e8f0fa">DB2</text></svg>
<div class="t" style="left:45px;top:236px;;letter-spacing:-0.91px;">DB2</div>
<svg class="i" style="left:23.0px;top:253.0px" width="16" height="16" viewBox="0 0 16 16"><circle cx="8" cy="8" r="7" fill="#5b8cc4" stroke="#3a669c" stroke-width=".9"/><path d="M3 5c1.5-1 3-1.5 4-.5s0 2.5 1 3 2.5-1 3.5 0 0 3-1 4-2.5-.5-3-2-2-1-3-2-2-1.5-1.5-2.5z" fill="#dfe9f6"/><path d="M10 2.5c1.5.5 3 1.5 3.5 3-1 .5-2 0-2.5-1z" fill="#dfe9f6"/></svg>
<div class="t" style="left:45px;top:254px;;letter-spacing:-0.34px;">WMS/WMTS</div>
<svg class="i" style="left:23.0px;top:271.0px" width="16" height="16" viewBox="0 0 16 16"><rect x="1" y="1" width="14" height="14" fill="#555"/><path d="M5.7 1v14M10.3 1v14M1 5.7h14M1 10.3h14" stroke="#fff" stroke-width="1.3"/></svg>
<div class="t" style="left:45px;top:272px;;letter-spacing:-0.29px;">Vector Tiles</div>
<svg class="i" style="left:8px;top:293px" width="6" height="9" viewBox="0 0 6 9"><path d="M0.5 0.3L5 4.5L0.5 8.7z" fill="#555"/></svg>
<svg class="i" style="left:23.0px;top:289.0px" width="16" height="16" viewBox="0 0 16 16"><path d="M1 1h3.8v3.8H1zM6.1 1h3.8v3.8H6.1zM11.2 1H15v3.8h-3.8zM1 6.1h3.8v3.8H1zM6.1 6.1h3.8v3.8H6.1zM11.2 6.1H15v3.8h-3.8zM1 11.2h3.8V15H1zM6.1 11.2h3.8V15H6.1zM11.2 11.2H15V15h-3.8z" fill="#6a9bd8"/></svg>
<div class="t" style="left:45px;top:290px;;letter-spacing:-0.53px;">XYZ Tiles</div>
<svg class="i" style="left:23.0px;top:307.0px" width="16" height="16" viewBox="0 0 16 16"><circle cx="8" cy="8" r="7" fill="#fff" stroke="#2e5a94" stroke-width="1.2"/><ellipse cx="8" cy="8" rx="3.2" ry="7" fill="none" stroke="#2e5a94" stroke-width="1"/><path d="M1 8h14M2.5 4.2h11M2.5 11.8h11" stroke="#2e5a94" stroke-width="1.7"/></svg>
<div class="t" style="left:45px;top:308px;;letter-spacing:-1.03px;">WCS</div>
<svg class="i" style="left:23.0px;top:325.0px" width="16" height="16" viewBox="0 0 16 16"><circle cx="8" cy="8" r="7" fill="#fff" stroke="#7aa3d6" stroke-width="1"/><ellipse cx="8" cy="8" rx="3.2" ry="7" fill="none" stroke="#a9c6ea" stroke-width=".7"/><path d="M1 8h14M2.5 4.2h11M2.5 11.8h11" stroke="#a9c6ea" stroke-width=".7"/><path d="M4 4.5l3.5 7 2-6.5 3-.5" fill="none" stroke="#444" stroke-width=".9"/></svg>
<div class="t" style="left:45px;top:326px;;letter-spacing:-0.21px;">WFS / OGC API - Features</div>
<svg class="i" style="left:23.0px;top:343.0px" width="16" height="16" viewBox="0 0 16 16"><circle cx="8" cy="8" r="7" fill="#fff" stroke="#7aa3d6" stroke-width="1"/><ellipse cx="8" cy="8" rx="3.2" ry="7" fill="none" stroke="#8fb1dc" stroke-width=".8"/><path d="M1 8h14M2.5 4.2h11M2.5 11.8h11M8 1v14" stroke="#8fb1dc" stroke-width=".8"/></svg>
<div class="t" style="left:45px;top:344px;;letter-spacing:-0.99px;">OWS</div>
<svg class="i" style="left:23.0px;top:361.0px" width="16" height="16" viewBox="0 0 16 16"><circle cx="8" cy="8" r="7" fill="#5b8cc4" stroke="#3a669c" stroke-width=".9"/><path d="M3 5c1.5-1 3-1.5 4-.5s0 2.5 1 3 2.5-1 3.5 0 0 3-1 4-2.5-.5-3-2-2-1-3-2-2-1.5-1.5-2.5z" fill="#dfe9f6"/><path d="M10 2.5c1.5.5 3 1.5 3.5 3-1 .5-2 0-2.5-1z" fill="#dfe9f6"/></svg>
<div class="t" style="left:45px;top:362px;;letter-spacing:-0.31px;">ArcGisMapServer</div>
<svg class="i" style="left:23.0px;top:379.0px" width="16" height="16" viewBox="0 0 16 16"><circle cx="8" cy="8" r="7" fill="#5b8cc4" stroke="#3a669c" stroke-width=".9"/><path d="M3 5c1.5-1 3-1.5 4-.5s0 2.5 1 3 2.5-1 3.5 0 0 3-1 4-2.5-.5-3-2-2-1-3-2-2-1.5-1.5-2.5z" fill="#dfe9f6"/><path d="M10 2.5c1.5.5 3 1.5 3.5 3-1 .5-2 0-2.5-1z" fill="#dfe9f6"/></svg>
<div class="t" style="left:45px;top:380px;;letter-spacing:-0.46px;">ArcGisFeatureServer</div>
</div>
<div class="" style="left:178px;top:164px;width:14px;height:386px;background:linear-gradient(90deg,#fdfdfd,#f1f1f1);border-left:1px solid #c6c6c6"></div>
<div class="" style="left:178px;top:164px;width:14px;height:14px;background:linear-gradient(#fefefe,#f3f3f3);border-left:1px solid #c6c6c6;border-bottom:1px solid #c6c6c6"></div>
<svg class="i" style="left:181px;top:168px" width="8" height="5" viewBox="0 0 8 5"><path d="M0.300 4.700h7.400L4 0.600z" fill="#555"/></svg>
<div class="" style="left:178px;top:504px;width:14px;height:33px;background:#e3e3e3;border:1px solid #c2c2c2;border-right:none"></div>
<div class="" style="left:178px;top:536px;width:14px;height:14px;background:linear-gradient(#fefefe,#f3f3f3);border-left:1px solid #c6c6c6;border-top:1px solid #c6c6c6"></div>
<svg class="i" style="left:181px;top:541px" width="8" height="5" viewBox="0 0 8 5"><path d="M0.300 0.300h7.400L4 4.400z" fill="#555"/></svg>
<div class="" style="left:2px;top:550px;width:190px;height:15px;background:linear-gradient(#fdfdfd,#f1f1f1);border-top:1px solid #c6c6c6"></div>
<div class="" style="left:123px;top:550px;width:42px;height:15px;background:#e3e3e3;border:1px solid #c2c2c2;border-bottom:none"></div>
<div class="" style="left:2px;top:550px;width:13px;height:15px;background:linear-gradient(#fefefe,#f3f3f3);border-top:1px solid #c6c6c6;border-right:1px solid #c6c6c6"></div>
<div class="" style="left:164px;top:550px;width:14px;height:15px;background:linear-gradient(#fefefe,#f3f3f3);border-top:1px solid #c6c6c6;border-left:1px solid #c6c6c6"></div>
<div class="" style="left:178px;top:550px;width:14px;height:15px;background:#f0f0f0;border-top:1px solid #c6c6c6;border-left:1px solid #c6c6c6"></div>
<svg class="i" style="left:6px;top:554px" width="5" height="8" viewBox="0 0 5 8"><path d="M4.700 0.300v7.400L0.600 4z" fill="#555"/></svg>
<svg class="i" style="left:169px;top:554px" width="5" height="8" viewBox="0 0 5 8"><path d="M0.300 0.300v7.400L4.400 4z" fill="#555"/></svg>
<div class="" style="left:90px;top:568px;width:16px;height:1px;background-image:linear-gradient(90deg,#aaa 1px,transparent 1px);background-size:3px 1px"></div>
<div class="" style="left:196px;top:472px;width:1px;height:18px;background-image:linear-gradient(#aaa 1px,transparent 1px);background-size:1px 3px"></div>
<div class="" style="left:793px;top:472px;width:1px;height:18px;background-image:linear-gradient(#aaa 1px,transparent 1px);background-size:1px 3px"></div>
<div class="t" style="left:5px;top:573px;;letter-spacing:-0.72px;">Layers</div>
<svg class="i" style="left:166px;top:575px" width="25" height="11" viewBox="0 0 25 11" fill="none" stroke="#5c5752"><rect x="0.600" y="0.600" width="9.800" height="9.800" rx="2.200" stroke-width="1.200"/><path d="M4.500 3.500v-0.400a0.600 0.600 0 0 1 0.600-0.600h2.800a0.600 0.600 0 0 1 0.600 0.600v2.800a0.600 0.600 0 0 1-0.600 0.600h-0.400" stroke-width="1"/><rect x="2.500" y="4.500" width="4" height="4" rx="0.900" stroke-width="1" fill="#f6f6f6"/><rect x="14.600" y="0.600" width="9.800" height="9.800" rx="2.200" stroke-width="1.200"/><path d="M17 3l5 5M22 3l-5 5" stroke-width="1.900" stroke="#4a4540"/></svg>
<div class="" style="left:5px;top:594px;width:24px;height:23px;border:1px solid #a8a8a8;border-radius:3px;background:#dcdcdc"></div>
<svg class="i" style="left:9.0px;top:597.0px" width="16" height="16" viewBox="0 0 16 16"><path d="M2 9l5-3 4 5-5 3z" fill="#d9534f"/><path d="M1 8l5-3 1.5 1.8-5 3z" fill="#4a86c8"/><path d="M6 11.5l4.5-2.8 1.5 2-5 3z" fill="#f0c030"/><path d="M8.5 7.5L15 1.5" stroke="#e8a33d" stroke-width="2.2" stroke-linecap="round"/><path d="M7 7l2.5 2.5" stroke="#888" stroke-width="1.5"/></svg>
<svg class="i" style="left:34.0px;top:597.0px" width="16" height="16" viewBox="0 0 16 16"><rect x="2.5" y="3.5" width="8" height="9.5" fill="#e9e9e9" stroke="#666" stroke-width=".9"/><rect x="4.5" y="1.5" width="4" height="3" fill="#ddd" stroke="#666" stroke-width=".8"/><path d="M4.5 7.5h4M6.5 5.5v7" stroke="#666" stroke-width=".8" /><rect x="9.5" y="9.5" width="6" height="6" rx="1.2" fill="#57a65a" stroke="#3d8842" stroke-width=".6"/><path d="M12.5 10.8v3.4M10.8 12.5h3.4" stroke="#fff" stroke-width="1.3"/></svg>
<svg class="i" style="left:59.0px;top:597.0px" width="16" height="16" viewBox="0 0 16 16"><path d="M.8 7.5c3-4.5 10-4.5 13.5 0-3.5 4.5-10.5 4.5-13.5 0z" fill="#fff" stroke="#777" stroke-width="1"/><circle cx="7.5" cy="7.5" r="3" fill="#5b8cc4"/><circle cx="7.5" cy="7.5" r="1.3" fill="#223"/><path d="M10.5 13h5l-2.5 2.8z" fill="#666"/></svg>
<svg class="i" style="left:84.5px;top:597.0px" width="16" height="16" viewBox="0 0 16 16"><path d="M1 2.5h14L9.8 8.5V15l-3.6-1.5V8.5z" fill="#5b8cc4" stroke="#3f6eaa" stroke-width=".7"/><rect x="1" y="1" width="14" height="2.2" rx=".8" fill="#efc52b" stroke="#c79a10" stroke-width=".5"/></svg>
<svg class="i" style="left:110.0px;top:597.0px" width="16" height="16" viewBox="0 0 16 16"><text x="0" y="11.5" font-family="Liberation Serif" font-size="18" fill="#5c2d7a">&#949;</text><path d="M8.3 9h7.400v1.500l-2.400 2.500v3h-2.600v-3l-2.400-2.500z" fill="#9a9a9a"/><path d="M9.800 10h4.400l-1.600 2v3h-1.200v-3z" fill="#eee"/></svg>
<svg class="i" style="left:147.0px;top:597.0px" width="16" height="16" viewBox="0 0 16 16"><path d="M2.5 3v10.5M2.5 3H5M2.5 8H5M2.5 13H5" stroke="#777" stroke-width=".9" stroke-dasharray="1 1" fill="none"/><rect x="4.5" y="6.5" width="3" height="3" fill="#ee8a22"/><rect x="4.5" y="1.5" width="3" height="3" fill="#ee8a22"/><path d="M11 15l4.5-5.5H13V1H9v8.5H6.5z" fill="#3c6fad" stroke="#2d578c" stroke-width=".5"/></svg>
<svg class="i" style="left:131px;top:603px" width="8" height="5" viewBox="0 0 8 5"><path d="M0.5 0.5h7L4 4.2z" fill="#444"/></svg>
<svg class="i" style="left:179px;top:601px" width="10" height="9" viewBox="0 0 10 9"><path d="M1 1.200l3.200 3.300L1 7.800M5.500 1.200l3.200 3.300-3.200 3.300" fill="none" stroke="#000" stroke-width="1.600"/></svg>
<div class="" style="left:1px;top:621px;width:192px;height:225px;background:#fff;border:1px solid #a0a0a0"></div>
<div class="" style="left:2px;top:622px;width:188px;height:18px;background:#f0f0f0"></div>
<div class="cb" style="left:25px;top:624px;border-color:#333"><svg class="i" style="left:0;top:0" width="11" height="11" viewBox="0 0 11 11"><path d="M2 5.500L4.500 8.500L9 2" stroke="#000" stroke-width="1.600" fill="none"/></svg></div>
<svg class="i" style="left:45.0px;top:623.0px" width="16" height="16" viewBox="0 0 16 16"><circle cx="8" cy="8" r="6.3" fill="#9e3a5e" stroke="#7c2c49" stroke-width=".8"/></svg>
<div class="t" style="left:67px;top:624px;font-weight:bold;text-decoration:underline;letter-spacing:-0.59px;">places</div>
<div class="" style="left:188px;top:623px;width:2px;height:17px;background:#e4e4e4"></div>
<div class="cb" style="left:25px;top:642px;border-color:#333"><svg class="i" style="left:0;top:0" width="11" height="11" viewBox="0 0 11 11"><path d="M2 5.500L4.500 8.500L9 2" stroke="#000" stroke-width="1.600" fill="none"/></svg></div>
<svg class="i" style="left:45.0px;top:641.0px" width="16" height="16" viewBox="0 0 16 16"><path d="M1.5 8h13" stroke="#c8c8c8" stroke-width="3.4"/><path d="M1.5 8h13" stroke="#ececec" stroke-width="1.6"/></svg>
<div class="t" style="left:65.5px;top:642px;font-weight:bold;letter-spacing:-0.63px;">roads</div>
<div class="" style="left:188px;top:641px;width:2px;height:17px;background:#e4e4e4"></div>
<div class="cb" style="left:25px;top:660px;border-color:#333"><svg class="i" style="left:0;top:0" width="11" height="11" viewBox="0 0 11 11"><path d="M2 5.500L4.500 8.500L9 2" stroke="#000" stroke-width="1.600" fill="none"/></svg></div>
<svg class="i" style="left:45.0px;top:659.0px" width="16" height="16" viewBox="0 0 16 16"><path d="M1.5 8h13" stroke="#8db6dc" stroke-width="1.3"/></svg>
<div class="t" style="left:65.5px;top:660px;font-weight:bold;letter-spacing:-0.16px;">rivers</div>
<div class="" style="left:188px;top:659px;width:2px;height:17px;background:#e4e4e4"></div>
<div class="cb" style="left:25px;top:678px;border-color:#b0b0b0"><svg class="i" style="left:0;top:0" width="11" height="11" viewBox="0 0 11 11"><path d="M2 5.500L4.500 8.500L9 2" stroke="#9a9a9a" stroke-width="1.600" fill="none"/></svg></div>
<svg class="i" style="left:45.0px;top:677.0px" width="16" height="16" viewBox="0 0 16 16"><rect x="0" y="0" width="16" height="16" fill="#ff7f00"/></svg>
<div class="t" style="left:67px;top:678px;font-weight:bold;font-style:italic;color:#8a8a8a;letter-spacing:-0.21px;">buildings</div>
<div class="" style="left:188px;top:677px;width:2px;height:17px;background:#e4e4e4"></div>
<div class="cb" style="left:25px;top:696px;border-color:#333"><svg class="i" style="left:0;top:0" width="11" height="11" viewBox="0 0 11 11"><path d="M2 5.500L4.500 8.500L9 2" stroke="#000" stroke-width="1.600" fill="none"/></svg></div>
<svg class="i" style="left:45.0px;top:695.0px" width="16" height="16" viewBox="0 0 16 16"><rect x="0" y="0" width="16" height="16" fill="#a6cde3"/><path d="M4.2 5.5h7.6L8 11.5z" fill="#2b7fc0" stroke="#10202c" stroke-width=".9" stroke-linejoin="round"/></svg>
<div class="t" style="left:67px;top:696px;font-weight:bold;letter-spacing:0.21px;">water</div>
<div class="" style="left:188px;top:695px;width:2px;height:17px;background:#e4e4e4"></div>
<div class="cb" style="left:25px;top:714px;border-color:#333"><svg class="i" style="left:0;top:0" width="11" height="11" viewBox="0 0 11 11"><path d="M2 5.500L4.500 8.500L9 2" stroke="#000" stroke-width="1.600" fill="none"/></svg></div>
<svg class="i" style="left:45.0px;top:713.0px" width="16" height="16" viewBox="0 0 16 16"><rect x=".5" y=".5" width="15" height="15" rx="1.5" fill="#86c27f" stroke="#33a02c" stroke-width="1.6" stroke-dasharray="2.5 1.5"/></svg>
<div class="t" style="left:67px;top:714px;font-weight:bold;letter-spacing:-0.18px;">protected_areas</div>
<div class="" style="left:188px;top:713px;width:2px;height:17px;background:#e4e4e4"></div>
<div class="cb" style="left:25px;top:732px;border-color:#333"><svg class="i" style="left:0;top:0" width="11" height="11" viewBox="0 0 11 11"><path d="M2 5.500L4.500 8.500L9 2" stroke="#000" stroke-width="1.600" fill="none"/></svg></div>
<svg class="i" style="left:45.0px;top:731.0px" width="16" height="16" viewBox="0 0 16 16"><rect x="0" y="0" width="16" height="16" fill="#d9d9d9"/></svg>
<div class="t" style="left:67px;top:732px;font-weight:bold;letter-spacing:-0.56px;">landuse</div>
<div class="" style="left:188px;top:731px;width:2px;height:17px;background:#e4e4e4"></div>
<div class="" style="left:199px;top:113px;width:590px;height:733px;background:#fff;border:1px solid #b4b2b4"></div>
<svg style="left:200px;top:114px" width="588" height="731" viewBox="200 114 588 731"><path d="M333.8 323.8 L355 323.8 L375 320 L387.5 321.2 L390.5 337.5 L386.2 353.8 L378.8 372.5 L372.5 380 L360 385 L352.5 380 L370 372.5 L372.5 350 L360 347.5 L347.5 350 L340 347.5 L333.8 332.5Z" fill="#d9d9d9"/>
<path d="M400 325 L412.5 312.5 L425 310 L450 312.5 L475 311.2 L487.8 315.5 L485 323 L472.5 323.8 L476.2 332.5 L473.8 344.5 L450 347.5 L440 337.5 L446.2 325 L432.5 325 L420 335 L425 350 L415 357.5 L400 358.8 L395 350 L397.5 337.5Z" fill="#d9d9d9"/>
<path d="M296.2 390 L312.5 383.8 L330 379.5 L350 375 L360 385 L372.5 380 L387.5 367.5 L402.5 366.2 L412.5 375 L415 390 L400 397.5 L397.5 417.5 L375 425 L350 436.2 L335 446.2 L320 451.2 L300 453.8 L282.5 462.5 L275 475 L250 485 L272.5 450 L282.5 440 L272.5 425 L275 410 L287.5 400Z" fill="#d9d9d9"/>
<path d="M330 475 L340 472.5 L350 475 L360 472.5 L365 478.8 L352.5 483.8 L342.5 485 L345 500 L340 507.5 L330 490Z" fill="#d9d9d9"/>
<path d="M365 492.5 L375 492 L376.2 497.5 L366.2 498Z" fill="#d9d9d9"/>
<path d="M611 345 L618.5 340 L626 345 L641 343.8 L656 350 L676 357.5 L698.5 362.5 L718.5 371.2 L724.8 373.8 L718.5 383.8 L709.8 386.2 L716 390 L713.5 402.5 L706 412.5 L698.5 412.5 L698.5 395 L693.5 385 L676 377.5 L656 372.5 L641 370 L631 373.8 L623.5 375 L618.5 370 L611 367.5 L607.2 357.5Z" fill="#d9d9d9"/>
<path d="M636 382.5 L653.5 381.2 L661 395 L673.5 407.5 L681 412.5 L678.5 422.5 L671 437.5 L661 447.5 L653.5 448.8 L654 433.8 L632.2 433 L634.8 417.5 L633.5 402.5Z" fill="#d9d9d9"/>
<path d="M606 403.8 L623.5 402.5 L632.2 405 L633.5 417.5 L636 427.5 L626 432.5 L613.5 437.5 L606 430 L603.5 417.5Z" fill="#d9d9d9"/>
<path d="M573.5 416.2 L583.5 415 L601 421.2 L611 430 L611 440 L601 437.5 L586 428.8 L576 421.2Z" fill="#d9d9d9"/>
<path d="M628.5 440 L632.2 433 L641 450 L631 447.5Z" fill="#d9d9d9"/>
<path d="M738.5 355 L751 347.5 L771 345 L786 343.8 L791 345 L791 362.5 L776 360 L766 362.5 L761 372.5 L751 387.5 L741 397.5 L726 405 L718.5 402.5 L721 392.5 L733.5 382.5 L741 370 L743.5 362.5Z" fill="#d9d9d9"/>
<path d="M708.5 410 L728.5 410 L738.5 422.5 L751 440 L748.5 447.5 L731 450 L728.5 470 L731 473.8 L726 477.5 L703.5 481.2 L701 467.5 L698.5 450 L697.2 435 L701 422.5Z" fill="#d9d9d9"/>
<path d="M256.2 521.5 L266.2 522.8 L261.2 544 L253.8 545.2Z" fill="#d9d9d9"/>
<path d="M527.2 715 L538.5 706.2 L553.5 733.8 L531 732.5 L526 722.5Z" fill="#d9d9d9"/>
<ellipse cx="660" cy="570" rx="9.5" ry="8" fill="#d9d9d9"/>
<ellipse cx="507.5" cy="726.5" rx="18" ry="15.5" fill="#d9d9d9"/>
<path d="M198 111 L525 111 L525 113 L341 139.5 L634 203 L521 257 L587 308 L412 308.5 L409 315 L399 320 L386 319 L372 310 L356 311 L341 316 L337 323 L325 322 L322 302 L322 291 L310 282.5 L300 281 L261 280 L198 286Z" fill="#86b97f" stroke="#33a02c" stroke-width="1"/>
<path d="M200.3 616.7 L265 558 L277.5 553 L289 535.5 L300 536.5 L320 543 L334 538 L348 524 L363 510 L372.5 503 L397.5 501 L407.5 502 L432.5 525.5 L454 545.4 L445 558 L449.7 557.4 L470.4 538.5 L486.8 541.6 L492.5 537.9 L454.7 513.3 L459 503.9 L470.4 510.2 L500.6 525.9 L533.3 532.2 L560 532.5 L590 533 L598 534 L610.5 541.5 L618 547.5 L628 546.5 L643 547.5 L630.5 559 L627 571.5 L625 581 L638 592.5 L654 607.5 L654 612.5 L643 626.5 L630.5 637.5 L623 644 L620.5 656.5 L615.5 662.5 L583 670 L538 681.5 L534.3 689 L535.5 704 L525.5 711.5 L518 714 L488 717.8 L470 724.5 L457.5 735.5 L450 733 L439 728 L412.5 710.5 L400 709 L380 710.3 L365 705 L352.5 696.5 L345 689 L345 679 L350 670.5 L361 659 L365 655.3 L350 649 L335 645.2 L317.5 642.7 L300 642.7 L287.5 641.5 L280 644 L278.8 656.5 L275 659 L260 671.5 L240 684 L225 689.5 L215 688 L208 685 L200.5 677 L200.3 659 L204 648 L208 638 L207 627Z" fill="#86b97f" stroke="#33a02c" stroke-width="1"/>
<path d="M514.4 118.1L516.6 111.7L510.5 112.6ZM503.7 119.7L505.9 113.2L499.8 114.1ZM493.0 121.2L495.2 114.8L489.1 115.7ZM482.4 122.7L484.6 116.3L478.4 117.2ZM471.7 124.3L473.9 117.9L467.7 118.7ZM461.0 125.8L463.2 119.4L457.0 120.3ZM450.3 127.4L452.5 120.9L446.4 121.8ZM439.6 128.9L441.8 122.5L435.7 123.4ZM428.9 130.4L431.1 124.0L425.0 124.9ZM418.2 132.0L420.4 125.6L414.3 126.4ZM407.5 133.5L409.7 127.1L403.6 128.0ZM396.8 135.1L399.0 128.6L392.9 129.5ZM386.1 136.6L388.4 130.2L382.2 131.1ZM375.5 138.1L377.7 131.7L371.5 132.6ZM364.8 139.7L367.0 133.3L360.8 134.1ZM354.1 141.2L356.3 134.8L350.1 135.7ZM343.4 142.8L345.6 136.3L339.5 137.2ZM350.5 137.9L346.1 143.2L352.2 144.5ZM361.0 140.2L356.7 145.4L362.8 146.8ZM371.6 142.5L367.3 147.7L373.3 149.0ZM382.1 144.8L377.8 150.0L383.9 151.3ZM392.7 147.1L388.4 152.3L394.4 153.6ZM403.2 149.3L398.9 154.6L405.0 155.9ZM413.8 151.6L409.5 156.9L415.5 158.2ZM424.3 153.9L420.0 159.2L426.1 160.5ZM434.9 156.2L430.6 161.5L436.6 162.8ZM445.4 158.5L441.1 163.7L447.2 165.1ZM456.0 160.8L451.7 166.0L457.8 167.3ZM466.6 163.1L462.2 168.3L468.3 169.6ZM477.1 165.4L472.8 170.6L478.9 171.9ZM487.7 167.6L483.4 172.9L489.4 174.2ZM498.2 169.9L493.9 175.2L500.0 176.5ZM508.8 172.2L504.5 177.5L510.5 178.8ZM519.3 174.5L515.0 179.8L521.1 181.1ZM529.9 176.8L525.6 182.0L531.6 183.4ZM540.4 179.1L536.1 184.3L542.2 185.6ZM551.0 181.4L546.7 186.6L552.7 187.9ZM561.6 183.7L557.2 188.9L563.3 190.2ZM572.1 185.9L567.8 191.2L573.9 192.5ZM582.7 188.2L578.4 193.5L584.4 194.8ZM593.2 190.5L588.9 195.8L595.0 197.1ZM603.8 192.8L599.5 198.1L605.5 199.4ZM614.3 195.1L610.0 200.3L616.1 201.7ZM624.9 197.4L620.6 202.6L626.6 203.9ZM634.9 206.5L635.1 199.7L629.5 202.4ZM625.2 211.2L625.4 204.4L619.8 207.1ZM615.4 215.8L615.6 209.0L610.0 211.7ZM605.7 220.5L605.9 213.7L600.3 216.4ZM595.9 225.1L596.1 218.4L590.5 221.0ZM586.2 229.8L586.4 223.0L580.8 225.7ZM576.4 234.5L576.6 227.7L571.0 230.3ZM566.7 239.1L566.9 232.3L561.3 235.0ZM556.9 243.8L557.1 237.0L551.5 239.7ZM547.2 248.4L547.4 241.6L541.8 244.3ZM537.5 253.1L537.7 246.3L532.1 249.0ZM527.7 257.7L527.9 251.0L522.3 253.6ZM527.2 257.3L521.0 260.2L525.9 264.0ZM535.7 263.9L529.6 266.8L534.5 270.6ZM544.3 270.5L538.1 273.4L543.0 277.2ZM552.8 277.1L546.7 280.0L551.6 283.8ZM561.4 283.7L555.2 286.6L560.1 290.4ZM569.9 290.3L563.8 293.2L568.7 297.0ZM578.5 296.9L572.3 299.8L577.2 303.6ZM587.0 303.5L580.9 306.4L585.8 310.2ZM579.0 311.6L582.0 305.5L575.8 305.6ZM568.2 311.6L571.2 305.6L565.0 305.6ZM557.4 311.6L560.4 305.6L554.2 305.6ZM546.6 311.7L549.6 305.6L543.4 305.6ZM535.8 311.7L538.8 305.7L532.6 305.7ZM525.0 311.7L528.0 305.7L521.8 305.7ZM514.2 311.8L517.2 305.7L511.0 305.7ZM503.4 311.8L506.4 305.8L500.2 305.8ZM492.6 311.8L495.6 305.8L489.4 305.8ZM481.8 311.9L484.8 305.8L478.6 305.8ZM471.0 311.9L474.0 305.8L467.8 305.9ZM460.2 311.9L463.2 305.9L457.0 305.9ZM449.4 312.0L452.4 305.9L446.2 305.9ZM438.6 312.0L441.6 305.9L435.4 306.0ZM427.8 312.0L430.8 306.0L424.6 306.0ZM417.0 312.1L420.0 306.0L413.8 306.0ZM412.8 315.3L408.6 310.0L406.0 315.6ZM402.1 322.4L402.2 315.6L396.6 318.4ZM389.6 322.9L393.2 317.1L387.0 316.6ZM378.3 318.3L384.2 314.9L379.0 311.5ZM371.2 313.6L373.9 307.4L367.7 307.8ZM360.4 314.3L363.1 308.1L356.9 308.5ZM350.9 316.5L351.9 309.8L346.0 311.7ZM343.3 319.1L339.6 313.5L336.5 318.8ZM332.4 326.2L336.0 320.4L329.8 319.9ZM321.0 319.5L327.5 321.6L326.5 315.5ZM319.4 308.8L325.9 311.0L324.9 304.8ZM318.4 297.5L324.5 300.6L324.5 294.4ZM316.5 291.4L322.5 288.3L317.4 284.7ZM309.1 286.0L313.1 280.5L307.0 279.5ZM298.9 284.5L302.1 278.6L295.9 278.4ZM288.1 284.3L291.3 278.3L285.1 278.1ZM277.3 284.0L280.5 278.0L274.3 277.9ZM266.5 283.7L269.7 277.7L263.5 277.6ZM256.1 284.0L258.6 277.7L252.5 278.3ZM245.4 285.1L247.9 278.8L241.7 279.3ZM234.6 286.1L237.1 279.8L231.0 280.4ZM223.9 287.1L226.4 280.8L220.2 281.4ZM213.1 288.1L215.6 281.8L209.5 282.4ZM202.4 289.2L204.9 282.9L198.7 283.4ZM201.9 610.4L203.7 617.0L208.3 612.8ZM209.9 603.2L211.7 609.7L216.3 605.6ZM217.9 595.9L219.7 602.5L224.3 598.3ZM225.9 588.7L227.7 595.2L232.3 591.1ZM233.9 581.4L235.7 588.0L240.3 583.8ZM241.9 574.1L243.7 580.7L248.3 576.5ZM249.9 566.9L251.7 573.5L256.3 569.3ZM257.9 559.6L259.7 566.2L264.3 562.0ZM267.8 553.0L267.2 559.8L272.9 557.5ZM275.5 549.6L278.8 555.5L282.3 550.3ZM281.4 540.5L284.8 546.4L288.2 541.3ZM291.7 532.2L288.1 537.9L294.3 538.5ZM303.2 533.8L298.4 538.6L304.3 540.5ZM313.5 537.1L308.6 541.9L314.5 543.8ZM321.4 538.7L320.5 545.4L326.4 543.4ZM331.6 535.1L330.7 541.8L336.5 539.7ZM338.2 528.8L340.3 535.2L344.7 530.8ZM345.9 521.1L347.8 527.6L352.3 523.4ZM353.8 513.7L355.7 520.2L360.2 516.0ZM362.2 506.2L363.2 512.9L368.2 509.2ZM372.8 499.4L370.2 505.7L376.4 505.2ZM383.6 498.5L380.9 504.8L387.1 504.3ZM394.3 497.7L391.7 504.0L397.9 503.5ZM405.7 498.2L402.0 503.9L408.2 504.6ZM416.2 505.3L409.8 507.6L414.4 511.9ZM424.1 512.7L417.7 515.0L422.2 519.3ZM432.0 520.1L425.6 522.4L430.1 526.6ZM439.9 527.5L433.5 529.8L438.0 534.0ZM447.8 534.8L441.4 537.1L446.0 541.3ZM455.7 542.1L449.3 544.5L453.9 548.7ZM451.2 555.5L448.1 549.4L444.5 554.5ZM447.6 554.5L449.4 561.0L454.0 556.9ZM455.6 547.2L457.4 553.8L461.9 549.6ZM463.6 539.9L465.3 546.5L469.9 542.3ZM475.8 535.9L471.6 541.3L477.7 542.4ZM486.4 537.9L482.2 543.3L488.3 544.4ZM488.1 539.3L494.0 535.9L488.8 532.5ZM479.1 533.4L485.0 530.0L479.8 526.7ZM470.0 527.5L475.9 524.1L470.7 520.8ZM461.0 521.6L466.9 518.3L461.7 514.9ZM451.9 510.9L456.1 516.2L458.7 510.6ZM462.0 501.5L456.4 505.3L461.8 508.3ZM471.5 506.7L465.8 510.5L471.2 513.5ZM481.0 511.7L475.4 515.6L480.9 518.5ZM490.5 516.6L485.0 520.6L490.5 523.4ZM500.1 521.6L494.6 525.6L500.1 528.4ZM509.5 524.0L505.3 529.3L511.4 530.5ZM520.1 526.0L515.9 531.4L522.0 532.6ZM530.7 528.1L526.5 533.4L532.6 534.6ZM540.8 528.7L537.7 534.7L543.9 534.8ZM551.6 528.8L548.5 534.9L554.7 534.9ZM562.5 529.0L559.3 535.0L565.5 535.1ZM573.3 529.2L570.1 535.1L576.3 535.3ZM584.1 529.3L580.9 535.3L587.1 535.4ZM595.2 530.1L591.4 535.7L597.5 536.4ZM606.3 534.8L600.5 538.4L605.8 541.6ZM615.7 541.1L609.5 543.8L614.3 547.7ZM622.6 543.5L620.1 549.8L626.3 549.2ZM633.9 543.3L630.4 549.1L636.6 549.6ZM644.3 551.1L642.5 544.6L638.0 548.8ZM636.4 558.4L634.6 551.9L630.0 556.1ZM632.3 565.8L627.3 561.2L625.6 567.2ZM629.7 576.1L624.4 571.8L623.1 577.8ZM631.1 581.6L624.8 584.1L629.4 588.2ZM639.2 588.8L632.9 591.3L637.5 595.4ZM647.2 596.2L640.8 598.5L645.3 602.7ZM655.1 603.6L648.7 605.9L653.2 610.1ZM654.4 617.8L651.6 611.6L647.7 616.5ZM647.7 626.3L644.9 620.1L641.0 625.0ZM639.6 634.3L637.9 627.7L633.3 631.8ZM631.4 641.4L629.8 634.8L625.1 638.9ZM626.0 647.4L620.6 643.1L619.4 649.2ZM622.7 659.4L620.1 653.1L616.1 657.9ZM612.6 666.8L614.3 660.2L608.3 661.6ZM602.1 669.2L603.8 662.7L597.7 664.1ZM591.6 671.7L593.2 665.1L587.2 666.5ZM581.2 674.2L582.7 667.5L576.7 669.1ZM570.7 676.8L572.2 670.2L566.2 671.7ZM560.2 679.5L561.7 672.9L555.7 674.4ZM549.8 682.2L551.3 675.5L545.3 677.1ZM539.3 684.8L540.8 678.2L534.8 679.8ZM538.0 690.7L531.7 688.1L532.2 694.3ZM538.9 701.5L532.6 698.9L533.1 705.1ZM530.8 712.0L529.6 705.3L524.7 709.0ZM520.1 717.1L521.2 710.3L515.3 712.3ZM508.8 718.8L511.1 712.4L504.9 713.2ZM498.1 720.1L500.4 713.7L494.2 714.5ZM488.2 721.5L489.0 714.8L483.2 716.9ZM478.1 725.3L478.9 718.5L473.1 720.7ZM469.7 729.5L468.1 722.9L463.4 727.0ZM461.6 736.6L459.9 730.0L455.3 734.1ZM448.0 736.0L453.3 731.8L447.7 729.2ZM438.2 731.5L443.5 727.3L437.9 724.8ZM428.6 725.4L434.6 722.1L429.4 718.7ZM419.6 719.5L425.5 716.1L420.4 712.7ZM410.6 713.5L416.5 710.2L411.4 706.8ZM401.4 712.8L405.2 707.1L399.1 706.4ZM391.3 713.1L394.0 706.9L387.8 707.3ZM380.6 713.8L383.3 707.6L377.1 708.0ZM368.9 710.2L373.9 705.5L368.0 703.4ZM358.6 704.9L364.5 701.7L359.4 698.2ZM349.2 698.3L355.7 696.2L351.3 691.8ZM341.4 687.8L347.5 690.9L347.5 684.7ZM343.0 675.4L346.6 681.2L349.7 675.8ZM349.5 665.9L351.7 672.3L356.0 667.8ZM357.0 658.1L359.2 664.5L363.5 660.0ZM360.6 657.3L365.8 653.0L360.1 650.6ZM350.7 653.2L355.9 648.8L350.2 646.4ZM340.8 650.4L345.3 645.3L339.3 643.7ZM330.7 648.2L334.6 642.6L328.4 641.8ZM320.0 646.7L323.9 641.1L317.8 640.2ZM309.7 646.3L312.8 640.2L306.6 640.2ZM298.6 646.1L302.2 640.4L296.1 639.8ZM287.8 645.1L291.5 639.4L285.3 638.8ZM283.3 646.6L277.6 642.9L277.0 649.1ZM280.4 659.7L279.6 653.0L274.4 656.4ZM272.1 666.0L270.6 659.4L265.9 663.4ZM263.8 673.0L262.3 666.3L257.6 670.3ZM254.4 679.2L253.8 672.4L248.6 675.7ZM245.3 684.9L244.7 678.1L239.4 681.4ZM234.8 689.7L235.7 683.0L229.8 685.1ZM222.8 692.8L226.8 687.3L220.7 686.3ZM211.5 690.4L216.7 686.0L211.0 683.6ZM201.6 683.4L208.2 681.5L203.9 677.0ZM199.8 649.4L204.5 654.2L206.5 648.4ZM203.7 639.1L208.2 644.2L210.5 638.5ZM203.7 630.2L210.0 632.7L209.4 626.5ZM199.7 622.3L206.4 621.6L203.1 616.4Z" fill="#33a02c"/>
<path d="M638 371.2 L653.5 375 L649.8 382.5 L641 382Z" fill="#a6cde3"/>
<path d="M535.5 426.2 L544.8 420 L548.5 425 L538.5 427.5Z" fill="#a6cde3"/>
<path d="M721 457.5 L732.2 457.5 L732.2 463.8 L721 463.8Z" fill="#a6cde3"/>
<path d="M738.5 447.5 L747.2 447.5 L746 452.5 L739.8 452Z" fill="#a6cde3"/>
<path d="M603 415 L607.2 416.2 L608.5 421.2 L603.5 421.2Z" fill="#a6cde3"/>
<path d="M607.2 432.5 L611 435 L612.2 441.2 L607.2 440Z" fill="#a6cde3"/>
<path d="M518 337.5 L522.2 341.2 L519.8 343.8Z" fill="#a6cde3"/>
<path d="M644.8 465 L653.5 467.5 L651 470Z" fill="#a6cde3"/>
<path d="M676 473.2 L686 474 L684.8 477.5 L677.2 477Z" fill="#a6cde3"/>
<path d="M288.8 335 L296.2 332 L297.5 340 L296.2 350 L285 348.8Z" fill="#a6cde3"/>
<path d="M282.5 353.8 L287.5 352 L288 357.5 L283.8 358Z" fill="#a6cde3"/>
<path d="M298.8 320 L307.5 317 L308 323 L302 324.5Z" fill="#a6cde3"/>
<path d="M247.5 350 L251.2 349.5 L252.5 356.2 L248.8 356.2Z" fill="#a6cde3"/>
<path d="M453 408.8 L456.2 412.5 L455 417.5 L452.5 416.2Z" fill="#a6cde3"/>
<path d="M237.5 306.2 L233.8 325 L232.5 340 L226.2 357.5 L225 372.5 L223.6 400 L219.9 415 L221.1 427.6 L213.6 440.2 L212.3 452.8 L214.8 467.8 L221.1 475.4 L226.2 487.9 L227.4 500.5 L238.7 505.5 L243.7 510.6 L241.2 518.1 L245 523.1 L238.7 535.7 L228.7 548.2 L222.4 565.8 L216.1 575.9 L214.8 596 L206 603.5 L199.8 613.6M199.8 450.3 L206 465.3 L216.1 482.9 L223.6 490.5 L227 494M332.5 333.8 L335 347.5 L350 362.5 L360 375 L363.8 382.5M387.5 321.2 L392.5 337.5 L385 353.8 L380 372.5 L372.5 380 L360 392.5 L345 407.5 L335 420 L325 437.5 L312.5 450 L295 460 L279 475.4 L271.4 483 L262 488 L258 497 L256 506 L243.7 510.6M788.8 341.2 L773.5 347.5 L761 353.8 L751 370 L741 387.5 L726 402.5 L711 415 L701 427.5 L696 437.5 L698.5 460 L701 480 L713.5 492.5 L723.5 510 L733.5 525 L746 540 L753.5 545 L754.8 548.8M728 519 L738 531.5 L753 546.5 L750.5 559 L738 569 L734.2 579 L735.5 587.8 L725.5 599 L713 609 L700.5 612.8 L698 619 L708 626.5 L709.2 636.5 L705.5 649 L703 661.5 L703 679 L698 690.2 L685.5 692.8 L675.5 701.5 L671.8 716.5 L661.8 726.5 L661.8 737.8M677.2 700 L673.5 707.5 L672.2 717.5 L663.5 723.8 L661 728.8 L662.2 737.5 L649.8 748.8M486 741.2 L501 743 L508.5 742.5 L528.5 738 L556 736.8 L582.2 733.8 L606 722.5 L626 714.2 L637.2 713 L647.2 718.8 L648.5 725 L647.2 738.8 L649.8 748.8 L651 758.8 L648 771.2 L633.5 783.8 L608.5 793.8 L596.8 810 L596.2 828 L608.5 840 L626 844.5 L633.5 843.8 L642.2 845M280 644 L282.5 630.2 L288.8 625.2 L296.2 629 L302.5 636.5 L317.5 640.2 L335 641 L355 644 L366.2 649 L370 655.2 L366.2 660.2 L355 669 L347.5 675.2 L345 689 L352.5 696.5 L365 705.2 L380 710.2 L400 709 L412.5 716.5 L430 729 L443.8 737.8 L455 741.5 L475 744 L487.5 741.5 L502.5 742.8M200 674 L210 684 L225 689.5 L240 685.2 L260 671.5 L275 659 L278.8 649 L280 644" fill="none" stroke="#3a87c4" stroke-width="1.1" stroke-linejoin="round"/>
<path d="M324 217 L345 216 L348.5 233 L352.5 238 L350 244 L356 247 L350 258 L340 268 L335 273M200 273.8 L207.5 280 L211.2 276.2 L225 277.5 L233.8 273.8 L238.8 277.5 L246.2 275 L253.8 280 L261.2 287.5 L272.5 293.8 L277.5 297.5 L291.2 301.2 L298.8 310 L307.5 308.8 L313.8 301.2 L316.2 303.8 L313.8 315 L310 325 L303.8 332.5 L307.5 337.5 L317.5 341.2M298.8 281.2 L320 277.5 L335 272.5 L360 273.8 L385 276.2 L407.5 280 L412.5 293.8 L417.5 308.8 L425 312.5 L432.5 322.5 L435 327.5M298.8 281.2 L310 287.5 L322.5 291.2 L328.8 300 L330 312.5 L325 322.5 L322.5 332.5M360 273.8 L350 282.5 L355 290 L352.5 296.2 L360 303.8 L356.2 308.8 L345 315 L342.5 320M412.5 293.8 L425 285 L450 276.2 L456.2 265 L457.5 256.2 L450 252.5 L455 250M455 258 L450 250.5 L462.5 245.5M420 287 L460 283 L500 288 L530 298 L550 310.5 L570 305.5 L587.5 303 L615 299 L617.5 293 L600 289 L585 285.5 L595 278 L600 263 L595 258 L575 253 L560 247 L552.5 242 L535 230.5 L525 220.5 L510 217M370 302.5 L380 310 L387.5 317.5 L392.5 307.5 L395 297.5 L401.2 290M387.5 317.5 L375 321.2 L360 322.5 L345 320 L335 322.5 L325 322.5M387.5 317.5 L407.5 316.2 L417.5 308.8M500 288 L520 299 L550 310.5M261.8 552 L257.6 548.2 L253.3 543.2 L254.3 530.6 L258.8 525.6 L267.6 510.5 L276.4 493 L289 475.4 L301.5 462.8 L319.1 451.5 L330 447.5 L360 437 L390 428 L422.5 423 L450 426.2 L487.8 437M199.8 616 L231.2 585.9 L261.8 552 L266.4 540.7 L270.1 525.6 L273.9 510.5 L281.4 493 L294 475.4 L306.5 462.8 L321.6 454 L332.5 450.5 L361.2 440 L391.2 431 L423.8 425M250 485.4 L253.8 486.7 L263.8 484.2 L278.9 475.4 L296.5 460.3 L320 447.5 L330 447.5M199.8 412.6 L228.7 433.9 L229.9 454 L236.2 467.8 L250 485.4 L253.8 486.7 L268.9 504.3 L273.9 508M228.8 435 L253.8 430 L275 426.2 L282.5 430M200 497.5 L210 493.8 L237.5 493.8 L251.2 486.2 L275 490M225 297.5 L237.5 298.8 L245 302.5 L247.5 310 L251.2 322.5 L252.5 337.5 L253.8 360 L252.5 347.5 L262.5 372.5 L275 387.5 L285 390.5 L300 400M261.2 372.5 L253.8 377.5 L243.8 395 L240 412.5 L237.5 430M232.5 394.5 L243.8 396.2M230 402.5 L240 403.8M285 390.5 L292.5 380 L312.5 368.8 L335 362.5 L345 366.2 L355 380 L362.5 385M317.5 316.2 L310 325 L303.8 332.5 L307.5 337.5 L317.5 341.2M325 315 L322.5 330 L316.2 347.5 L313.8 365 L315 382.5 L318.8 392.5M335 311.2 L330 320 L323.8 332.5 L322.5 345M360 360 L363.8 372.5 L365 380M340 317.5 L362.5 322.5 L385 318.8 L390 315M357.5 330 L360 340 L370 347.5 L375 337.5 L385 327.5 L390 318.8M390 315 L395 327.5 L392.5 342.5 L390 357.5 L400 365 L412.5 375 L416.2 387.5 L410 405 L395 417.5 L390 420M395 327.5 L410 325 L425 317.5 L439.4 317M416 306 L425 311 L439.4 317 L450.3 315.6 L467.5 314.8 L484.7 317.2 L501.9 313.3 L503.4 306.25 L512.8 307 L536.25 308.6 L550.3 311.7M395 342.5 L412.5 337.5 L430 335 L435 325 L440 317.5M392.5 358.8 L425 356.2 L447.5 351.2 L465 361.2 L472.5 375 L473.8 392.5 L467.5 412.5 L462.5 428.8M425 356.2 L427.5 366.2 L430 370M487.8 375 L486.25 382.8 L480 387.5 L472.2 400 L466 420 L463 430M390 420 L407.5 422.5 L423.8 423.8M426.2 425 L417.5 432.5 L412.5 440 L415 455 L425 472.5 L440 490 L455.3 500.8 L506.9 535.3 L529.6 549.8M425 472.5 L420 476.2 L418.8 480 L422.5 480M330 472.5 L350 480 L362.5 492.5 L380 493.8 L390 502.5M250 486.7 L247.5 510.5 L251.3 511.8 L257.6 496.7M486 437 L501 441.2 L526 447.5 L576 462.5 L613.5 475 L646 487.5 L661 493.8 L686 515M646 487.5 L676 486.2 L686 487.5 L693.5 491.2M526 450 L528.5 457.5 L538.5 467.5 L546 473.8 L561 473 L568.5 476.2M486.25 383 L495.6 386.7 L506.6 393.75 L505 404.7 L516 420 L511 430 L506 441.2M487.8 375 L503.4 378.1 L503 380.5M551 371.2 L549.8 387.5 L548.5 397.5 L551 405 L547.2 412.5 L541 413.8M547.2 412.5 L548.5 420 L556 428.8M548.5 421.2 L536 428.8 L532.2 440 L530.5 447.5M562.2 398.8 L563.5 405 L567.2 415 L576 422.5 L601 438.8 L613.5 445 L631 455 L643.5 462.5 L651 466.2 L661 466.2 L671 460 L681 450 L691 437.5 L697.2 425 L698.5 405 L698.5 395 L693.5 385 L683.5 378.8 L673.5 376.2 L661 370 L646 361.2 L636 358.8 L611 360 L608.5 356.2M608.5 357.5 L604.8 361.2 L593.5 365 L590.5 370 L594.8 376.2M638.5 346.2 L641 352.5 L637.2 357.5M673.5 357.5 L686 355 L697.2 354.5M673.5 376.2 L683.5 371.2 L693.5 370 L697.2 366.2M656 407.5 L654.8 430 L652.2 450 L651 460 L647.2 461.2 L651 466.2M656 415 L676 417.5 L696 423.8M656 418.8 L673.5 421.2M657.2 381.2 L663.5 392.5 L667.2 403.8 L676 410 L678.5 417.5 L673.5 427.5 L666 442.5 L658.5 450 L657.2 457.5M651 460 L661 456.2 L671 460 L666 466.2 L657.2 467.5 L656 480M671 462.5 L676 475 L679.8 485M677.2 478.8 L686 476.2M656 492.5 L651 496.2 L641 507.5 L626 518.8 L611 527.5 L598.5 530 L586 525.5M602.2 425 L606 430 L608.5 437.5M686 515 L696 517.5 L691 522.5 L673.5 526.2 L669.8 530 L673.5 533.8 L686 536.2 L691 530 L697.2 528.8 L691 537.5 L683.5 547.5M258.8 548.2 L231.2 565.8 L232.4 568.3 L260 550.8M272.5 540.2 L267.5 554M261.2 551.5 L267.5 556.5 L275 569 L275 581.5M275 581.5 L275 601.5 L270 624 L262.5 639 L262.5 649 L270 655.2 L275 649 L277.5 629 L285 619 L295 617.8 L300 624 L307.5 634 L325 635.2 L350 639 L370 642.8M281.2 582.8 L285 591.5 L295 594 L305 594 L308.8 601.5 L306.2 609 L300 614 L292.5 617.8M288.8 646.5 L287.5 659 L282.5 674 L262.5 686.5 L255 699 L242.5 704.5M223.8 694 L225 701.5 L235 702.8 L237.5 705.2M290 647.8 L310 644 L325 645.2 L335 654 L350 655.2 L360 657.8M360 636.5 L372.5 629 L378.8 632.8 L380 644M367.5 641.5 L372.5 632.8 L375 644M380 644 L417.5 594 L417.6 590 L422.6 578 L431.4 568 L447.8 559.2 L456 562.5 L457.9 566.8M457.9 561.5 L460.4 558.3 L487.75 556.5 L529.5 550M397.5 575.2 L402.5 584 L417.5 592.8 L425 624 L430 654 L433.8 665.2 L467.5 694 L487.8 696.5M433.8 665.2 L420 672.8 L385 677.8 L362.5 691.5M352.5 676.5 L362.5 691.5 L385 697.8 L408.8 704 L412.5 694 L406.2 677.8M378.8 655.2 L370 661.5 L353.8 675.2 L365 672.8 L375 676.5 L385 677.8 L383.8 669 L378.8 661.5M487.8 602.8 L465 639 L441.2 671.5M483 556.5 L480.5 566.8 L468 575.6 L446.5 584.4 L437 600 L435 606.5 L440 629 L447.5 641.5M468.8 572.8 L475 584 L487.8 599M457.8 560.5 L458 556.7 L480.5 545.4 L506.9 535.3M443.8 516.5 L450 526.5 L460 530.2M455.3 500.8 L450.3 503.3 L441.5 512.7 L441.5 517.7 L446.5 522.8 L455.3 530.3 L461.6 530.3 L459.1 534 L455.3 532.2M696.8 527.8 L685.5 541.5 L675.5 556.5 L675.5 574 L663 599 L653 616.5 L638 636.5 L628 651.5 L613 671.5 L603 686.5 L595.5 695.2 L588 696.5 L580.5 692.8 L573 695.2 L565.5 692.8 L549.2 700.2M529.2 550.2 L555.5 545.2 L570.5 545.2 L580.5 551.5 L590.5 559 L595.5 567.8 L613 580.2 L618 587.8 L615.5 596.5 L611.8 600.2 L598 609 L595.5 619 L583 631.5 L571.8 636.5 L566.8 634 L558 635.2 L545.5 631.5 L528 626.5 L513 621.5 L504.2 622.8 L490.5 606.5M486.8 519 L503 534 L529.2 550.2 L611.8 600.2 L618 611.5 L630.5 649M543 532.8 L529.2 550.2 L520.5 581.5 L503 587.8 L488 605.2M529.2 550.2 L488 605.2M543 532.8 L573 533.5 L575.5 534.5M504.2 622.8 L500.5 636.5 L501.8 649 L495.5 656.5 L488 661.5M488 661.5 L495.5 664 L520.5 699 L520.5 701.5 L488 696.5M488 669 L493 676.5 L491.8 682.8 L488 685.2" fill="none" stroke="#505050" stroke-width="3.4" stroke-linejoin="round" stroke-linecap="round"/>
<path d="M299.4 425.8 L321.6 454.2M303.2 422.9 L325.3 451.3M306.9 420 L329 448.4M310.6 417.1 L332.8 445.5M314.3 414.2 L336.5 442.5M318.1 411.3 L340.2 439.6M321.8 408.4 L343.9 436.7M325.5 405.5 L347.7 433.8M329.2 402.5 L351.4 430.9M333 399.6 L355.1 428M336.7 396.7 L358.8 425.1M340.4 393.8 L362.6 422.2M299.4 425.8 L340.4 393.8M305 432.9 L345.9 400.9M310.5 440 L351.5 408M316.1 447.1 L357 415.1M321.6 454.2 L362.6 422.2M274.5 415.1 L287.7 439.8M278.5 413 L291.7 437.7M282.5 410.9 L295.6 435.6M286.5 408.8 L299.6 433.5M290.4 406.6 L303.6 431.4M294.4 404.5 L307.5 429.2M298.4 402.4 L311.5 427.1M302.3 400.3 L315.5 425M306.3 398.2 L319.5 422.9M274.5 415.1 L306.3 398.2M278.9 423.3 L310.7 406.4M283.3 431.6 L315.1 414.7M287.7 439.8 L319.5 422.9M320.7 397.3 L333 413M324.3 394.4 L336.7 410.2M328 391.6 L340.3 407.4M331.6 388.8 L343.9 404.5M335.2 386 L347.5 401.7M338.8 383.1 L351.2 398.9M342.5 380.3 L354.8 396M346.1 377.5 L358.4 393.2M349.7 374.6 L362 390.4M353.3 371.8 L365.7 387.6M357 369 L369.3 384.7M320.7 397.3 L357 369M324.8 402.5 L361.1 374.2M328.9 407.8 L365.2 379.5M333 413 L369.3 384.7M363.3 388 L375.6 403.8M367 385.2 L379.3 400.9M370.6 382.3 L383 398.1M374.3 379.4 L386.6 395.2M378 376.6 L390.3 392.3M381.7 373.7 L394 389.4M385.4 370.8 L397.7 386.6M389 367.9 L401.4 383.7M392.7 365.1 L405 380.8M396.4 362.2 L408.7 378M363.3 388 L396.4 362.2M367.4 393.3 L400.5 367.4M371.5 398.6 L404.6 372.7M375.6 403.8 L408.7 378M343.9 416.8 L355 431M347.6 414 L358.7 428.1M351.3 411.1 L362.3 425.3M354.9 408.2 L366 422.4M358.6 405.3 L369.7 419.5M362.3 402.5 L373.4 416.7M366 399.6 L377.1 413.8M369.7 396.7 L380.7 410.9M373.3 393.9 L384.4 408M377 391 L388.1 405.2M343.9 416.8 L377 391M347.6 421.6 L380.7 395.7M351.3 426.3 L384.4 400.4M355 431 L388.1 405.2M297.9 458.8 L308.9 472.9M302.1 455.5 L313.1 469.7M306.3 452.2 L317.3 466.4M310.5 448.9 L321.5 463.1M314.7 445.6 L325.7 459.8M318.9 442.3 L329.9 456.5M323.1 439.1 L334.1 453.2M297.9 458.8 L323.1 439.1M301.5 463.5 L326.8 443.8M305.2 468.2 L330.5 448.5M308.9 472.9 L334.1 453.2M298 440.3 L306.6 451.3M301.5 437.5 L310.1 448.6M305 434.8 L313.6 445.9M308.4 432.1 L317 443.2M311.9 429.4 L320.5 440.5M315.4 426.7 L324 437.7M298 440.3 L315.4 426.7M302.3 445.8 L319.7 432.2M306.6 451.3 L324 437.7M312.9 464 L324.3 460.6 L344.9 462.9 L358.6 460.6 L365.4 464 L368.9 473.1 L364.3 479.4 L354 479.4 L339.1 475.4 L332.3 474.3 L326.6 476.6 L330 483.4 L324.3 488 L312.9 489.1 L307.1 483.4 L308.3 472 L312.9 464M308.1 476.6 L314.8 464M308.7 483.9 L320.2 462.4M311.7 486.9 L325.2 461.5M315.6 488.2 L329.5 461.9M320.3 487.7 L333.8 462.4M325.4 486.7 L328.2 481.3M332.3 473.8 L338.1 462.9M336.6 474.2 L342.3 463.4M340.7 475 L347 463.2M344.6 476.1 L351.9 462.4M348.6 477.1 L356.9 461.5M352.6 478.2 L360.9 462.6M356.8 478.7 L364.4 464.4M361.4 478.7 L366.6 468.8M312.9 489.1 L324.3 488 L330 493.7 L335.7 504 L338 508.6 L324.3 504 L316.3 504 L310 494.9 L312.9 489.1M312.1 491.8 L317.4 489M312 496.4 L324.8 489.6M314.3 499.7 L327.7 492.5M316.6 503 L330.2 495.7M323.9 503.6 L332.2 499.2M329.6 505.2 L334.1 502.7M334.8 506.9 L336 506.3M316.3 504 L324.3 504 L338 508.6 L348.3 505.1 L351.7 506.9 L349.4 509.7 L338 513.1 L335.7 520 L336.9 525.7 L324.3 531.4 L316.3 526.9 L307.1 528 L303.1 525.1 L312.9 510.9 L316.3 504M305.1 525.6 L318.2 504.7M308.7 527.2 L322.8 504.7M313.7 526.6 L326.8 505.6M318 527 L330.6 506.9M321.4 528.9 L334.4 508.2M324.9 530.6 L338.5 509M331.4 527.7 L335.4 521.3M341.5 511.5 L344.3 507M347.1 509.8 L349.2 506.5M314 468.6 L327.7 474.3 L324.3 485.7M344.9 462.9 L343.7 474.3M316.3 504 L327.7 513.1 L335.7 520" fill="none" stroke="#585858" stroke-width="2.5" stroke-linecap="round"/>
<path d="M324 217 L345 216 L348.5 233 L352.5 238 L350 244 L356 247 L350 258 L340 268 L335 273M200 273.8 L207.5 280 L211.2 276.2 L225 277.5 L233.8 273.8 L238.8 277.5 L246.2 275 L253.8 280 L261.2 287.5 L272.5 293.8 L277.5 297.5 L291.2 301.2 L298.8 310 L307.5 308.8 L313.8 301.2 L316.2 303.8 L313.8 315 L310 325 L303.8 332.5 L307.5 337.5 L317.5 341.2M298.8 281.2 L320 277.5 L335 272.5 L360 273.8 L385 276.2 L407.5 280 L412.5 293.8 L417.5 308.8 L425 312.5 L432.5 322.5 L435 327.5M298.8 281.2 L310 287.5 L322.5 291.2 L328.8 300 L330 312.5 L325 322.5 L322.5 332.5M360 273.8 L350 282.5 L355 290 L352.5 296.2 L360 303.8 L356.2 308.8 L345 315 L342.5 320M412.5 293.8 L425 285 L450 276.2 L456.2 265 L457.5 256.2 L450 252.5 L455 250M455 258 L450 250.5 L462.5 245.5M420 287 L460 283 L500 288 L530 298 L550 310.5 L570 305.5 L587.5 303 L615 299 L617.5 293 L600 289 L585 285.5 L595 278 L600 263 L595 258 L575 253 L560 247 L552.5 242 L535 230.5 L525 220.5 L510 217M370 302.5 L380 310 L387.5 317.5 L392.5 307.5 L395 297.5 L401.2 290M387.5 317.5 L375 321.2 L360 322.5 L345 320 L335 322.5 L325 322.5M387.5 317.5 L407.5 316.2 L417.5 308.8M500 288 L520 299 L550 310.5M261.8 552 L257.6 548.2 L253.3 543.2 L254.3 530.6 L258.8 525.6 L267.6 510.5 L276.4 493 L289 475.4 L301.5 462.8 L319.1 451.5 L330 447.5 L360 437 L390 428 L422.5 423 L450 426.2 L487.8 437M199.8 616 L231.2 585.9 L261.8 552 L266.4 540.7 L270.1 525.6 L273.9 510.5 L281.4 493 L294 475.4 L306.5 462.8 L321.6 454 L332.5 450.5 L361.2 440 L391.2 431 L423.8 425M250 485.4 L253.8 486.7 L263.8 484.2 L278.9 475.4 L296.5 460.3 L320 447.5 L330 447.5M199.8 412.6 L228.7 433.9 L229.9 454 L236.2 467.8 L250 485.4 L253.8 486.7 L268.9 504.3 L273.9 508M228.8 435 L253.8 430 L275 426.2 L282.5 430M200 497.5 L210 493.8 L237.5 493.8 L251.2 486.2 L275 490M225 297.5 L237.5 298.8 L245 302.5 L247.5 310 L251.2 322.5 L252.5 337.5 L253.8 360 L252.5 347.5 L262.5 372.5 L275 387.5 L285 390.5 L300 400M261.2 372.5 L253.8 377.5 L243.8 395 L240 412.5 L237.5 430M232.5 394.5 L243.8 396.2M230 402.5 L240 403.8M285 390.5 L292.5 380 L312.5 368.8 L335 362.5 L345 366.2 L355 380 L362.5 385M317.5 316.2 L310 325 L303.8 332.5 L307.5 337.5 L317.5 341.2M325 315 L322.5 330 L316.2 347.5 L313.8 365 L315 382.5 L318.8 392.5M335 311.2 L330 320 L323.8 332.5 L322.5 345M360 360 L363.8 372.5 L365 380M340 317.5 L362.5 322.5 L385 318.8 L390 315M357.5 330 L360 340 L370 347.5 L375 337.5 L385 327.5 L390 318.8M390 315 L395 327.5 L392.5 342.5 L390 357.5 L400 365 L412.5 375 L416.2 387.5 L410 405 L395 417.5 L390 420M395 327.5 L410 325 L425 317.5 L439.4 317M416 306 L425 311 L439.4 317 L450.3 315.6 L467.5 314.8 L484.7 317.2 L501.9 313.3 L503.4 306.25 L512.8 307 L536.25 308.6 L550.3 311.7M395 342.5 L412.5 337.5 L430 335 L435 325 L440 317.5M392.5 358.8 L425 356.2 L447.5 351.2 L465 361.2 L472.5 375 L473.8 392.5 L467.5 412.5 L462.5 428.8M425 356.2 L427.5 366.2 L430 370M487.8 375 L486.25 382.8 L480 387.5 L472.2 400 L466 420 L463 430M390 420 L407.5 422.5 L423.8 423.8M426.2 425 L417.5 432.5 L412.5 440 L415 455 L425 472.5 L440 490 L455.3 500.8 L506.9 535.3 L529.6 549.8M425 472.5 L420 476.2 L418.8 480 L422.5 480M330 472.5 L350 480 L362.5 492.5 L380 493.8 L390 502.5M250 486.7 L247.5 510.5 L251.3 511.8 L257.6 496.7M486 437 L501 441.2 L526 447.5 L576 462.5 L613.5 475 L646 487.5 L661 493.8 L686 515M646 487.5 L676 486.2 L686 487.5 L693.5 491.2M526 450 L528.5 457.5 L538.5 467.5 L546 473.8 L561 473 L568.5 476.2M486.25 383 L495.6 386.7 L506.6 393.75 L505 404.7 L516 420 L511 430 L506 441.2M487.8 375 L503.4 378.1 L503 380.5M551 371.2 L549.8 387.5 L548.5 397.5 L551 405 L547.2 412.5 L541 413.8M547.2 412.5 L548.5 420 L556 428.8M548.5 421.2 L536 428.8 L532.2 440 L530.5 447.5M562.2 398.8 L563.5 405 L567.2 415 L576 422.5 L601 438.8 L613.5 445 L631 455 L643.5 462.5 L651 466.2 L661 466.2 L671 460 L681 450 L691 437.5 L697.2 425 L698.5 405 L698.5 395 L693.5 385 L683.5 378.8 L673.5 376.2 L661 370 L646 361.2 L636 358.8 L611 360 L608.5 356.2M608.5 357.5 L604.8 361.2 L593.5 365 L590.5 370 L594.8 376.2M638.5 346.2 L641 352.5 L637.2 357.5M673.5 357.5 L686 355 L697.2 354.5M673.5 376.2 L683.5 371.2 L693.5 370 L697.2 366.2M656 407.5 L654.8 430 L652.2 450 L651 460 L647.2 461.2 L651 466.2M656 415 L676 417.5 L696 423.8M656 418.8 L673.5 421.2M657.2 381.2 L663.5 392.5 L667.2 403.8 L676 410 L678.5 417.5 L673.5 427.5 L666 442.5 L658.5 450 L657.2 457.5M651 460 L661 456.2 L671 460 L666 466.2 L657.2 467.5 L656 480M671 462.5 L676 475 L679.8 485M677.2 478.8 L686 476.2M656 492.5 L651 496.2 L641 507.5 L626 518.8 L611 527.5 L598.5 530 L586 525.5M602.2 425 L606 430 L608.5 437.5M686 515 L696 517.5 L691 522.5 L673.5 526.2 L669.8 530 L673.5 533.8 L686 536.2 L691 530 L697.2 528.8 L691 537.5 L683.5 547.5M258.8 548.2 L231.2 565.8 L232.4 568.3 L260 550.8M272.5 540.2 L267.5 554M261.2 551.5 L267.5 556.5 L275 569 L275 581.5M275 581.5 L275 601.5 L270 624 L262.5 639 L262.5 649 L270 655.2 L275 649 L277.5 629 L285 619 L295 617.8 L300 624 L307.5 634 L325 635.2 L350 639 L370 642.8M281.2 582.8 L285 591.5 L295 594 L305 594 L308.8 601.5 L306.2 609 L300 614 L292.5 617.8M288.8 646.5 L287.5 659 L282.5 674 L262.5 686.5 L255 699 L242.5 704.5M223.8 694 L225 701.5 L235 702.8 L237.5 705.2M290 647.8 L310 644 L325 645.2 L335 654 L350 655.2 L360 657.8M360 636.5 L372.5 629 L378.8 632.8 L380 644M367.5 641.5 L372.5 632.8 L375 644M380 644 L417.5 594 L417.6 590 L422.6 578 L431.4 568 L447.8 559.2 L456 562.5 L457.9 566.8M457.9 561.5 L460.4 558.3 L487.75 556.5 L529.5 550M397.5 575.2 L402.5 584 L417.5 592.8 L425 624 L430 654 L433.8 665.2 L467.5 694 L487.8 696.5M433.8 665.2 L420 672.8 L385 677.8 L362.5 691.5M352.5 676.5 L362.5 691.5 L385 697.8 L408.8 704 L412.5 694 L406.2 677.8M378.8 655.2 L370 661.5 L353.8 675.2 L365 672.8 L375 676.5 L385 677.8 L383.8 669 L378.8 661.5M487.8 602.8 L465 639 L441.2 671.5M483 556.5 L480.5 566.8 L468 575.6 L446.5 584.4 L437 600 L435 606.5 L440 629 L447.5 641.5M468.8 572.8 L475 584 L487.8 599M457.8 560.5 L458 556.7 L480.5 545.4 L506.9 535.3M443.8 516.5 L450 526.5 L460 530.2M455.3 500.8 L450.3 503.3 L441.5 512.7 L441.5 517.7 L446.5 522.8 L455.3 530.3 L461.6 530.3 L459.1 534 L455.3 532.2M696.8 527.8 L685.5 541.5 L675.5 556.5 L675.5 574 L663 599 L653 616.5 L638 636.5 L628 651.5 L613 671.5 L603 686.5 L595.5 695.2 L588 696.5 L580.5 692.8 L573 695.2 L565.5 692.8 L549.2 700.2M529.2 550.2 L555.5 545.2 L570.5 545.2 L580.5 551.5 L590.5 559 L595.5 567.8 L613 580.2 L618 587.8 L615.5 596.5 L611.8 600.2 L598 609 L595.5 619 L583 631.5 L571.8 636.5 L566.8 634 L558 635.2 L545.5 631.5 L528 626.5 L513 621.5 L504.2 622.8 L490.5 606.5M486.8 519 L503 534 L529.2 550.2 L611.8 600.2 L618 611.5 L630.5 649M543 532.8 L529.2 550.2 L520.5 581.5 L503 587.8 L488 605.2M529.2 550.2 L488 605.2M543 532.8 L573 533.5 L575.5 534.5M504.2 622.8 L500.5 636.5 L501.8 649 L495.5 656.5 L488 661.5M488 661.5 L495.5 664 L520.5 699 L520.5 701.5 L488 696.5M488 669 L493 676.5 L491.8 682.8 L488 685.2" fill="none" stroke="#fff" stroke-width="1.9" stroke-linejoin="round" stroke-linecap="round"/>
<path d="M299.4 425.8 L321.6 454.2M303.2 422.9 L325.3 451.3M306.9 420 L329 448.4M310.6 417.1 L332.8 445.5M314.3 414.2 L336.5 442.5M318.1 411.3 L340.2 439.6M321.8 408.4 L343.9 436.7M325.5 405.5 L347.7 433.8M329.2 402.5 L351.4 430.9M333 399.6 L355.1 428M336.7 396.7 L358.8 425.1M340.4 393.8 L362.6 422.2M299.4 425.8 L340.4 393.8M305 432.9 L345.9 400.9M310.5 440 L351.5 408M316.1 447.1 L357 415.1M321.6 454.2 L362.6 422.2M274.5 415.1 L287.7 439.8M278.5 413 L291.7 437.7M282.5 410.9 L295.6 435.6M286.5 408.8 L299.6 433.5M290.4 406.6 L303.6 431.4M294.4 404.5 L307.5 429.2M298.4 402.4 L311.5 427.1M302.3 400.3 L315.5 425M306.3 398.2 L319.5 422.9M274.5 415.1 L306.3 398.2M278.9 423.3 L310.7 406.4M283.3 431.6 L315.1 414.7M287.7 439.8 L319.5 422.9M320.7 397.3 L333 413M324.3 394.4 L336.7 410.2M328 391.6 L340.3 407.4M331.6 388.8 L343.9 404.5M335.2 386 L347.5 401.7M338.8 383.1 L351.2 398.9M342.5 380.3 L354.8 396M346.1 377.5 L358.4 393.2M349.7 374.6 L362 390.4M353.3 371.8 L365.7 387.6M357 369 L369.3 384.7M320.7 397.3 L357 369M324.8 402.5 L361.1 374.2M328.9 407.8 L365.2 379.5M333 413 L369.3 384.7M363.3 388 L375.6 403.8M367 385.2 L379.3 400.9M370.6 382.3 L383 398.1M374.3 379.4 L386.6 395.2M378 376.6 L390.3 392.3M381.7 373.7 L394 389.4M385.4 370.8 L397.7 386.6M389 367.9 L401.4 383.7M392.7 365.1 L405 380.8M396.4 362.2 L408.7 378M363.3 388 L396.4 362.2M367.4 393.3 L400.5 367.4M371.5 398.6 L404.6 372.7M375.6 403.8 L408.7 378M343.9 416.8 L355 431M347.6 414 L358.7 428.1M351.3 411.1 L362.3 425.3M354.9 408.2 L366 422.4M358.6 405.3 L369.7 419.5M362.3 402.5 L373.4 416.7M366 399.6 L377.1 413.8M369.7 396.7 L380.7 410.9M373.3 393.9 L384.4 408M377 391 L388.1 405.2M343.9 416.8 L377 391M347.6 421.6 L380.7 395.7M351.3 426.3 L384.4 400.4M355 431 L388.1 405.2M297.9 458.8 L308.9 472.9M302.1 455.5 L313.1 469.7M306.3 452.2 L317.3 466.4M310.5 448.9 L321.5 463.1M314.7 445.6 L325.7 459.8M318.9 442.3 L329.9 456.5M323.1 439.1 L334.1 453.2M297.9 458.8 L323.1 439.1M301.5 463.5 L326.8 443.8M305.2 468.2 L330.5 448.5M308.9 472.9 L334.1 453.2M298 440.3 L306.6 451.3M301.5 437.5 L310.1 448.6M305 434.8 L313.6 445.9M308.4 432.1 L317 443.2M311.9 429.4 L320.5 440.5M315.4 426.7 L324 437.7M298 440.3 L315.4 426.7M302.3 445.8 L319.7 432.2M306.6 451.3 L324 437.7M312.9 464 L324.3 460.6 L344.9 462.9 L358.6 460.6 L365.4 464 L368.9 473.1 L364.3 479.4 L354 479.4 L339.1 475.4 L332.3 474.3 L326.6 476.6 L330 483.4 L324.3 488 L312.9 489.1 L307.1 483.4 L308.3 472 L312.9 464M308.1 476.6 L314.8 464M308.7 483.9 L320.2 462.4M311.7 486.9 L325.2 461.5M315.6 488.2 L329.5 461.9M320.3 487.7 L333.8 462.4M325.4 486.7 L328.2 481.3M332.3 473.8 L338.1 462.9M336.6 474.2 L342.3 463.4M340.7 475 L347 463.2M344.6 476.1 L351.9 462.4M348.6 477.1 L356.9 461.5M352.6 478.2 L360.9 462.6M356.8 478.7 L364.4 464.4M361.4 478.7 L366.6 468.8M312.9 489.1 L324.3 488 L330 493.7 L335.7 504 L338 508.6 L324.3 504 L316.3 504 L310 494.9 L312.9 489.1M312.1 491.8 L317.4 489M312 496.4 L324.8 489.6M314.3 499.7 L327.7 492.5M316.6 503 L330.2 495.7M323.9 503.6 L332.2 499.2M329.6 505.2 L334.1 502.7M334.8 506.9 L336 506.3M316.3 504 L324.3 504 L338 508.6 L348.3 505.1 L351.7 506.9 L349.4 509.7 L338 513.1 L335.7 520 L336.9 525.7 L324.3 531.4 L316.3 526.9 L307.1 528 L303.1 525.1 L312.9 510.9 L316.3 504M305.1 525.6 L318.2 504.7M308.7 527.2 L322.8 504.7M313.7 526.6 L326.8 505.6M318 527 L330.6 506.9M321.4 528.9 L334.4 508.2M324.9 530.6 L338.5 509M331.4 527.7 L335.4 521.3M341.5 511.5 L344.3 507M347.1 509.8 L349.2 506.5M314 468.6 L327.7 474.3 L324.3 485.7M344.9 462.9 L343.7 474.3M316.3 504 L327.7 513.1 L335.7 520" fill="none" stroke="#fff" stroke-width="1.3" stroke-linecap="round"/>
<path d="M517.5 342.0h7l-3.5 5.5zM622.0 348.0h7l-3.5 5.5zM679.5 367.5h7l-3.5 5.5zM643.3 375.5h7l-3.5 5.5zM600.5 403.7h7l-3.5 5.5zM602.5 416.7h7l-3.5 5.5zM545.5 405.5h7l-3.5 5.5zM539.5 422.0h7l-3.5 5.5zM605.5 436.7h7l-3.5 5.5zM647.0 466.3h7l-3.5 5.5zM678.0 473.0h7l-3.5 5.5zM655.5 490.0h7l-3.5 5.5zM672.5 495.5h7l-3.5 5.5zM687.5 501.3h7l-3.5 5.5zM652.5 507.5h7l-3.5 5.5zM738.7 448.0h7l-3.5 5.5zM723.3 458.3h7l-3.5 5.5zM772.5 478.7h7l-3.5 5.5zM775.5 482.5h7l-3.5 5.5zM264.0 304.5h7l-3.5 5.5zM264.5 310.0h7l-3.5 5.5zM258.5 322.5h7l-3.5 5.5zM300.3 325.5h7l-3.5 5.5zM289.5 341.3h7l-3.5 5.5zM282.3 355.5h7l-3.5 5.5zM244.7 338.7h7l-3.5 5.5zM247.0 351.3h7l-3.5 5.5zM345.3 338.7h7l-3.5 5.5zM318.3 373.3h7l-3.5 5.5zM304.5 380.5h7l-3.5 5.5zM397.3 368.0h7l-3.5 5.5zM443.3 348.7h7l-3.5 5.5zM445.7 357.5h7l-3.5 5.5zM452.0 413.3h7l-3.5 5.5z" fill="#2b7fc0" stroke="#10202c" stroke-width="0.9" stroke-linejoin="round"/>
<circle cx="323" cy="413.5" r="6.3" fill="#e1262c" stroke="#8f1418" stroke-width="0.9"/>
<circle cx="337" cy="464.5" r="6.3" fill="#e1262c" stroke="#8f1418" stroke-width="0.9"/>
<circle cx="687" cy="516" r="6.3" fill="#e1262c" stroke="#8f1418" stroke-width="0.9"/>
<circle cx="274" cy="580.5" r="6.3" fill="#e1262c" stroke="#8f1418" stroke-width="0.9"/>
<circle cx="379.5" cy="653.5" r="6.3" fill="#e1262c" stroke="#8f1418" stroke-width="0.9"/>
<text x="323.5" y="411.2" font-family="Liberation Sans, sans-serif" font-size="14" fill="#000" letter-spacing="-0.72">Swellendam</text>
<text x="336.8" y="462.2" font-family="Liberation Sans, sans-serif" font-size="14" fill="#000" letter-spacing="-0.65">Railton</text>
<text x="685.2" y="513.2" font-family="Liberation Sans, sans-serif" font-size="14" fill="#000" letter-spacing="-0.35">Buffeljagsrivier</text>
<text x="274" y="577.2" font-family="Liberation Sans, sans-serif" font-size="14" fill="#000" letter-spacing="-0.69">Bontebok National Park Reception &amp; Shop</text>
<text x="381" y="650.2" font-family="Liberation Sans, sans-serif" font-size="14" fill="#000" letter-spacing="-0.77">Lang Elsies Kraal Rest Camp</text></svg>
<div class="t" style="left:799px;top:115px;;letter-spacing:-0.24px;">Layer Styling</div>
<svg class="i" style="left:1125px;top:117px" width="25" height="11" viewBox="0 0 25 11" fill="none" stroke="#5c5752"><rect x="0.600" y="0.600" width="9.800" height="9.800" rx="2.200" stroke-width="1.200"/><path d="M4.500 3.500v-0.400a0.600 0.600 0 0 1 0.600-0.600h2.800a0.600 0.600 0 0 1 0.600 0.600v2.800a0.600 0.600 0 0 1-0.600 0.600h-0.400" stroke-width="1"/><rect x="2.500" y="4.500" width="4" height="4" rx="0.900" stroke-width="1" fill="#f6f6f6"/><rect x="14.600" y="0.600" width="9.800" height="9.800" rx="2.200" stroke-width="1.200"/><path d="M17 3l5 5M22 3l-5 5" stroke-width="1.900" stroke="#4a4540"/></svg>
<div class="cmb" style="left:798px;top:135px;width:351px;height:24px;"></div>
<svg class="i" style="left:802.0px;top:139.0px" width="16" height="16" viewBox="0 0 16 16"><circle cx="4" cy="11.5" r="1.4" fill="#fff" stroke="#888" stroke-width=".8"/><circle cx="5.5" cy="4.5" r="1.4" fill="#fff" stroke="#888" stroke-width=".8"/><circle cx="11.5" cy="3" r="1.4" fill="#fff" stroke="#888" stroke-width=".8"/></svg>
<div class="t" style="left:822px;top:140px;;letter-spacing:-0.76px;">places</div>
<svg class="i" style="left:1133px;top:145px" width="8" height="5" viewBox="0 0 8 5"><path d="M0.5 0.5h7L4 4.2z" fill="#444"/></svg>
<div class="" style="left:798px;top:165px;width:38px;height:678px;background:#5a5a5a"></div>
<div class="" style="left:798px;top:189px;width:38px;height:24px;background:#f0f0f0"></div>
<svg class="i" style="left:801.0px;top:169.0px" width="16" height="16" viewBox="0 0 16 16"><path d="M2 9l5-3 4 5-5 3z" fill="#d9534f"/><path d="M1 8l5-3 1.5 1.8-5 3z" fill="#4a86c8"/><path d="M6 11.5l4.5-2.8 1.5 2-5 3z" fill="#f0c030"/><path d="M8.5 7.5L15 1.5" stroke="#e8a33d" stroke-width="2.2" stroke-linecap="round"/><path d="M7 7l2.5 2.5" stroke="#888" stroke-width="1.5"/></svg>
<svg class="i" style="left:801.0px;top:193.0px" width="16" height="16" viewBox="0 0 16 16"><path d="M0.5 7.75L3.5 4H15.0V11.5H3.5Z" fill="#cfe6b8" stroke="#7aa34f" stroke-width=".9" stroke-linejoin="round"/><text x="3.5" y="9.9" font-family="Liberation Sans" font-weight="bold" font-size="6.6" fill="#4d7a2a" letter-spacing="-.2">abc</text></svg>
<svg class="i" style="left:801.0px;top:217.0px" width="16" height="16" viewBox="0 0 16 16"><rect x=".8" y="3.8" width="14.4" height="8.4" rx="4" fill="#fff" stroke="#ddd" stroke-width=".8"/><text x="2.3" y="10.5" font-family="Liberation Sans" font-weight="bold" font-size="7" fill="#333" letter-spacing="-.2">abc</text></svg>
<svg class="i" style="left:801.0px;top:241.0px" width="16" height="16" viewBox="0 0 16 16"><path d="M8 .8l6.8 3.4v7.6L8 15.2 1.2 11.8V4.2z" fill="#fff"/><path d="M8 1.5l6 3-6 3-6-3z" fill="#e8443a"/><path d="M2 5l6 3v6.7l-6-3z" fill="#7ac043"/><path d="M14 5L8 8v6.7l6-3z" fill="#f7d23e"/></svg>
<svg class="i" style="left:801.0px;top:265.0px" width="16" height="16" viewBox="0 0 16 16"><rect x="5" y="1" width="6" height="5" fill="#e8706a"/><path d="M8 6v3M3 12V9h10v3" stroke="#e8a33d" stroke-width="1.4" fill="none"/><rect x=".5" y="10.5" width="5" height="4.5" fill="#f3c94a"/><rect x="5.7" y="10.5" width="5" height="4.5" fill="#f3c94a"/><rect x="10.8" y="10.5" width="5" height="4.5" fill="#7fb2e5"/></svg>
<svg class="i" style="left:801.0px;top:289.0px" width="16" height="16" viewBox="0 0 16 16"><path d="M2 5.5L6 1.5v2.5c3 0 5 1.5 5 4" fill="none" stroke="#6fae6c" stroke-width="2.2"/><path d="M1.5 5.5L6.5.8v9.4z" fill="#6fae6c"/><path d="M14 11l-4 4v-2.5c-3 0-4.5-1-4.5-3.5" fill="none" stroke="#e8843a" stroke-width="2.2"/><path d="M14.5 11.5L9.5 16V7z" fill="#e8843a"/></svg>
<div class="cmb" style="left:839px;top:165px;width:280px;height:24px;"></div>
<svg class="i" style="left:846.0px;top:170.0px" width="14" height="14" viewBox="0 0 16 16"><path d="M0.5 7.5L3.5 3.5H15.0V11.5H3.5Z" fill="#f5d63d" stroke="#c8a21a" stroke-width=".9" stroke-linejoin="round"/><text x="3.5" y="9.9" font-family="Liberation Sans" font-weight="bold" font-size="6.6" fill="#333" letter-spacing="-.2">abc</text></svg>
<div class="t" style="left:863.5px;top:170px;;letter-spacing:-0.87px;">Single Labels</div>
<svg class="i" style="left:1103px;top:175px" width="8" height="5" viewBox="0 0 8 5"><path d="M0.5 0.5h7L4 4.2z" fill="#444"/></svg>
<div class="btn" style="left:1125px;top:165px;width:24px;height:24px;"></div>
<svg class="i" style="left:1129.0px;top:169.0px" width="16" height="16" viewBox="0 0 16 16"><path d="M4.500 0L9.500 4.500 5.500 8.500.5 4z" fill="#3f6a92"/><path d="M3 2l4 3.500M1.800 3.500l4 3.500M5.500 1.500L2.500 5M7.500 3L4.500 6.500" stroke="#9fbdd8" stroke-width=".6"/><circle cx="10" cy="9.800" r="3.800" fill="#f2d63b" stroke="#d9b920" stroke-width=".6"/><path d="M10 4.300v11M4.500 9.800h11M6.100 5.900l7.800 7.800M13.900 5.900l-7.800 7.800M7.900 4.700l4.200 10.200M12.100 4.700L7.900 14.900M4.900 7.700l10.200 4.200M15.100 7.700L4.900 11.900" stroke="#f2d63b" stroke-width="1.300"/><circle cx="10" cy="9.800" r="1.300" fill="#fff8d0"/></svg>
<div class="t" style="left:838.7px;top:200px;;letter-spacing:-0.98px;">Value</div>
<div class="edit" style="left:871px;top:196px;width:248px;height:24px;"></div>
<div class="t" style="left:875.5px;top:200px;font-size:9px;font-weight:bold;color:#555;letter-spacing:-0.17px;">abc</div>
<div class="t" style="left:894.4px;top:200px;;letter-spacing:-1.13px;">name</div>
<div class="" style="left:1098px;top:197px;width:1px;height:22px;background:#c8c8c8"></div>
<svg class="i" style="left:1103px;top:206px" width="8" height="5" viewBox="0 0 8 5"><path d="M0.5 0.5h7L4 4.2z" fill="#444"/></svg>
<div class="btn" style="left:1125px;top:196px;width:24px;height:24px;"></div>
<div class="t" style="left:1131px;top:198px;font-size:19px;color:#6a2c8a;font-family:Liberation Serif;">&epsilon;</div>
<div class="" style="left:887px;top:227px;width:49px;height:29px;border:1px solid #c4c4c4;border-bottom:1px solid #c4c4c4;background:linear-gradient(#f2f2f2,#e6e6e6);border-radius:3px 3px 0 0"></div>
<div class="" style="left:935px;top:227px;width:49px;height:29px;border:1px solid #c4c4c4;border-bottom:1px solid #c4c4c4;background:linear-gradient(#f2f2f2,#e6e6e6);border-radius:3px 3px 0 0"></div>
<div class="" style="left:983px;top:227px;width:49px;height:29px;border:1px solid #c4c4c4;border-bottom:1px solid #c4c4c4;background:linear-gradient(#f2f2f2,#e6e6e6);border-radius:3px 3px 0 0"></div>
<div class="" style="left:1031px;top:227px;width:49px;height:29px;border:1px solid #c4c4c4;border-bottom:1px solid #c4c4c4;background:linear-gradient(#f2f2f2,#e6e6e6);border-radius:3px 3px 0 0"></div>
<div class="" style="left:1079px;top:227px;width:41px;height:29px;border:1px solid #c4c4c4;border-bottom:1px solid #c4c4c4;background:linear-gradient(#f2f2f2,#e6e6e6);border-radius:3px 3px 0 0"></div>
<div class="" style="left:839px;top:225px;width:48px;height:32px;border:1px solid #c4c4c4;border-bottom:none;background:#fcfcfc;border-radius:3px 3px 0 0"></div>
<div class="t" style="left:853px;top:232px;font-size:11px;font-weight:bold;color:#333;letter-spacing:-0.66px;">abc</div>
<svg class="i" style="left:899.0px;top:230.5px" width="20" height="20" viewBox="0 0 16 16"><text x=".5" y="7" font-family="Liberation Sans" font-size="7.5" fill="#9a9a9a">+</text><text x="5.5" y="7" font-family="Liberation Sans" font-weight="bold" font-size="7.5" fill="#444">ab</text><text x=".5" y="14.5" font-family="Liberation Sans" font-size="7.5" fill="#9a9a9a">&lt;</text><text x="9.5" y="14.5" font-family="Liberation Sans" font-weight="bold" font-size="7.5" fill="#444">c</text></svg>
<svg class="i" style="left:946.5px;top:230.0px" width="21" height="21" viewBox="0 0 16 16"><rect x=".5" y="3" width="15" height="10" rx="4.5" fill="#8fb1f2"/><text x="2.5" y="10.8" font-family="Liberation Sans" font-weight="bold" font-size="7.6" fill="#2c4f9e" letter-spacing="-.2">abc</text></svg>
<svg class="i" style="left:994.5px;top:230.0px" width="21" height="21" viewBox="0 0 16 16"><rect x=".8" y="3.3" width="14.4" height="9.4" rx="4.5" fill="#fff" stroke="#c4c4c4" stroke-width=".9"/><text x="2.5" y="10.8" font-family="Liberation Sans" font-weight="bold" font-size="7.6" fill="#555" letter-spacing="-.2">abc</text></svg>
<svg class="i" style="left:1043.5px;top:230.5px" width="19" height="19" viewBox="0 0 16 16"><path d="M1.600 3.400C3.300 4 5.800 3.400 8 2c2.200 1.400 4.700 2 6.400 1.400 1 4.400-.3 9.200-6.400 12C1.900 12.600.6 7.800 1.600 3.400z" fill="#1c66b4" stroke="#174d8c" stroke-width=".6"/><path d="M1.600 3.400C3.300 4 5.800 3.400 8 2c2.200 1.400 4.700 2 6.400 1.400.2.900.3 1.700.3 2.600H1.300c0-.9.100-1.700.3-2.600z" fill="#e0242b"/></svg>
<svg class="i" style="left:1091.5px;top:230.5px" width="19" height="19" viewBox="0 0 16 16"><path d="M3.600 4.400C5.300 5 7.800 4.400 10 3c2.200 1.400 4.700 2 6.400 1.400 1 4.400-.3 8.200-6.400 11C3.900 12.600 2.600 8.800 3.600 4.400z" fill="#505050"/><path d="M1.400 2.400C3.100 3 5.600 2.400 7.800 1c2.200 1.400 4.700 2 6.400 1.400 1 4.400-.3 8.200-6.400 11C1.700 10.600.4 6.800 1.400 2.400z" fill="#e9eefc" stroke="#b7c6f3" stroke-width=".7"/></svg>
<div class="btn" style="left:1118px;top:225px;width:15px;height:32px;"></div>
<div class="btn" style="left:1134px;top:225px;width:15px;height:32px;"></div>
<svg class="i" style="left:1123px;top:237px" width="5" height="8" viewBox="0 0 5 8"><path d="M4.700 0.300v7.400L0.600 4z" fill="#b4b4b4"/></svg>
<svg class="i" style="left:1139px;top:237px" width="5" height="8" viewBox="0 0 5 8"><path d="M0.5 0.5v7L4.200 4z" fill="#333"/></svg>
<div class="t" style="left:838.7px;top:266px;;letter-spacing:-0.03px;">Text</div>
<div class="t" style="left:838.7px;top:292px;;letter-spacing:-0.53px;">Font</div>
<div class="edit" style="left:882px;top:288px;width:225px;height:23px;"></div>
<div class="t" style="left:885.5px;top:292px;font-size:11px;;letter-spacing:-0.48px;">MS Shell Dlg 2</div>
<div class="" style="left:1086px;top:289px;width:1px;height:21px;background:#c8c8c8"></div>
<svg class="i" style="left:1092px;top:297px" width="8" height="5" viewBox="0 0 8 5"><path d="M0.5 0.5h7L4 4.2z" fill="#444"/></svg>
<svg class="i" style="left:1116px;top:291px" width="24" height="16" viewBox="0 0 24 16"><path d="M0.200 7.800L5.500 3v9.600z" fill="#8c8c8c"/><rect x="5.500" y="0.500" width="12.300" height="14.800" fill="#fff" stroke="#6e6e6e" stroke-width="1"/><path d="M5.500 7.900h12.300" stroke="#6e6e6e" stroke-width="1"/><path d="M8 4.100h7.500" stroke="#555" stroke-width="1.700"/><path d="M8 11.400h7.500" stroke="#555" stroke-width="1"/><path d="M16.400 11.800h6.600l-3.300 3.800z" fill="#444"/></svg>
<div class="t" style="left:838.7px;top:330px;;letter-spacing:-0.69px;">Style</div>
<div class="cmb" style="left:882px;top:326px;width:225px;height:23px;"></div>
<div class="t" style="left:886px;top:330px;;letter-spacing:-0.79px;">Regular</div>
<svg class="i" style="left:1092px;top:335px" width="8" height="5" viewBox="0 0 8 5"><path d="M0.5 0.5h7L4 4.2z" fill="#444"/></svg>
<svg class="i" style="left:1116px;top:329px" width="24" height="16" viewBox="0 0 24 16"><path d="M0.200 7.800L5.500 3v9.600z" fill="#8c8c8c"/><rect x="5.500" y="0.500" width="12.300" height="14.800" fill="#fff" stroke="#6e6e6e" stroke-width="1"/><path d="M5.500 7.900h12.300" stroke="#6e6e6e" stroke-width="1"/><path d="M8 4.100h7.500" stroke="#555" stroke-width="1.700"/><path d="M8 11.400h7.500" stroke="#555" stroke-width="1"/><path d="M16.400 11.800h6.600l-3.300 3.800z" fill="#444"/></svg>
<div class="btn" style="left:882px;top:357px;width:24px;height:24px;"></div>
<div class="t" style="left:888.5px;top:361px;font-size:15px;line-height:16px;"><u>U</u></div>
<svg class="i" style="left:915px;top:361px" width="24" height="16" viewBox="0 0 24 16"><path d="M0.200 7.800L5.500 3v9.600z" fill="#8c8c8c"/><rect x="5.500" y="0.500" width="12.300" height="14.800" fill="#fff" stroke="#6e6e6e" stroke-width="1"/><path d="M5.500 7.900h12.300" stroke="#6e6e6e" stroke-width="1"/><path d="M8 4.100h7.500" stroke="#555" stroke-width="1.700"/><path d="M8 11.400h7.500" stroke="#555" stroke-width="1"/><path d="M16.400 11.800h6.600l-3.300 3.800z" fill="#444"/></svg>
<div class="btn" style="left:948px;top:357px;width:24px;height:24px;"></div>
<div class="t" style="left:955px;top:361px;font-size:15px;line-height:16px;"><s>S</s></div>
<svg class="i" style="left:981.5px;top:361px" width="24" height="16" viewBox="0 0 24 16"><path d="M0.200 7.800L5.500 3v9.600z" fill="#8c8c8c"/><rect x="5.500" y="0.500" width="12.300" height="14.800" fill="#fff" stroke="#6e6e6e" stroke-width="1"/><path d="M5.500 7.900h12.300" stroke="#6e6e6e" stroke-width="1"/><path d="M8 4.100h7.500" stroke="#555" stroke-width="1.700"/><path d="M8 11.400h7.500" stroke="#555" stroke-width="1"/><path d="M16.400 11.800h6.600l-3.300 3.800z" fill="#444"/></svg>
<div class="btn" style="left:1017px;top:357px;width:24px;height:24px;border-color:#d0d0d0"></div>
<div class="t" style="left:1024.5px;top:361px;font-size:15px;line-height:16px;color:#a2a2a2;">B</div>
<svg class="i" style="left:1050px;top:361px" width="24" height="16" viewBox="0 0 24 16"><path d="M0.200 7.800L5.500 3v9.600z" fill="#8c8c8c"/><rect x="5.500" y="0.500" width="12.300" height="14.800" fill="#fff" stroke="#6e6e6e" stroke-width="1"/><path d="M5.500 7.900h12.300" stroke="#6e6e6e" stroke-width="1"/><path d="M8 4.100h7.500" stroke="#555" stroke-width="1.700"/><path d="M8 11.400h7.500" stroke="#555" stroke-width="1"/><path d="M16.400 11.800h6.600l-3.300 3.800z" fill="#444"/></svg>
<div class="btn" style="left:1083px;top:357px;width:24px;height:24px;border-color:#d0d0d0"></div>
<div class="t" style="left:1092px;top:361px;font-size:16px;line-height:16px;color:#a2a2a2;font-family:Liberation Serif;"><i>I</i></div>
<svg class="i" style="left:1116px;top:361px" width="24" height="16" viewBox="0 0 24 16"><path d="M0.200 7.800L5.500 3v9.600z" fill="#8c8c8c"/><rect x="5.500" y="0.500" width="12.300" height="14.800" fill="#fff" stroke="#6e6e6e" stroke-width="1"/><path d="M5.500 7.900h12.300" stroke="#6e6e6e" stroke-width="1"/><path d="M8 4.100h7.500" stroke="#555" stroke-width="1.700"/><path d="M8 11.400h7.500" stroke="#555" stroke-width="1"/><path d="M16.400 11.800h6.600l-3.300 3.800z" fill="#444"/></svg>
<div class="t" style="left:838.8px;top:394px;;letter-spacing:-1.26px;">Size</div>
<div class="edit" style="left:882px;top:391px;width:225px;height:21px;"></div>
<div class="t" style="left:887.6px;top:394px;font-size:11px;;letter-spacing:-0.20px;">10.0000</div>
<div class="" style="left:1092px;top:392px;width:1px;height:19px;background:#c8c8c8"></div>
<svg class="i" style="left:1094.5px;top:396.5px" width="10" height="10" viewBox="0 0 16 16"><path d="M2.5 6.5L8 1.8l5.5 4.7zM2.5 9.5L8 14.2l5.5-4.7z" fill="#555"/></svg>
<svg class="i" style="left:1116px;top:393px" width="24" height="16" viewBox="0 0 24 16"><path d="M0.200 7.800L5.500 3v9.600z" fill="#8c8c8c"/><rect x="5.500" y="0.500" width="12.300" height="14.800" fill="#fff" stroke="#6e6e6e" stroke-width="1"/><path d="M5.500 7.900h12.300" stroke="#6e6e6e" stroke-width="1"/><path d="M8 4.100h7.500" stroke="#555" stroke-width="1.700"/><path d="M8 11.400h7.500" stroke="#555" stroke-width="1"/><path d="M16.400 11.800h6.600l-3.300 3.800z" fill="#444"/></svg>
<div class="cmb" style="left:882px;top:422px;width:225px;height:23px;"></div>
<div class="t" style="left:886px;top:426px;;letter-spacing:-0.67px;">Points</div>
<svg class="i" style="left:1092px;top:431px" width="8" height="5" viewBox="0 0 8 5"><path d="M0.5 0.5h7L4 4.2z" fill="#444"/></svg>
<svg class="i" style="left:1116px;top:425px" width="24" height="16" viewBox="0 0 24 16"><path d="M0.200 7.800L5.500 3v9.600z" fill="#8c8c8c"/><rect x="5.500" y="0.500" width="12.300" height="14.800" fill="#fff" stroke="#6e6e6e" stroke-width="1"/><path d="M5.500 7.900h12.300" stroke="#6e6e6e" stroke-width="1"/><path d="M8 4.100h7.500" stroke="#555" stroke-width="1.700"/><path d="M8 11.400h7.500" stroke="#555" stroke-width="1"/><path d="M16.400 11.800h6.600l-3.300 3.800z" fill="#444"/></svg>
<div class="t" style="left:838.8px;top:458px;;letter-spacing:-0.90px;">Color</div>
<div class="btn" style="left:882px;top:454px;width:214px;height:23px;"></div>
<div class="" style="left:887px;top:458px;width:204px;height:15px;background:#000;border-radius:2px"></div>
<div class="btn" style="left:1095px;top:454px;width:12px;height:23px;"></div>
<svg class="i" style="left:1097px;top:463px" width="8" height="5" viewBox="0 0 8 5"><path d="M0.5 0.5h7L4 4.2z" fill="#444"/></svg>
<svg class="i" style="left:1116px;top:457px" width="24" height="16" viewBox="0 0 24 16"><path d="M0.200 7.800L5.500 3v9.600z" fill="#8c8c8c"/><rect x="5.500" y="0.500" width="12.300" height="14.800" fill="#fff" stroke="#6e6e6e" stroke-width="1"/><path d="M5.500 7.900h12.300" stroke="#6e6e6e" stroke-width="1"/><path d="M8 4.100h7.500" stroke="#555" stroke-width="1.700"/><path d="M8 11.400h7.500" stroke="#555" stroke-width="1"/><path d="M16.400 11.800h6.600l-3.300 3.800z" fill="#444"/></svg>
<div class="t" style="left:838.8px;top:490px;;letter-spacing:-0.64px;">Opacity</div>
<div class="" style="left:883px;top:495px;width:110px;height:4px;background:#0a78d7;border:1px solid #3a8ad8;border-radius:2px"></div>
<div class="" style="left:990px;top:490px;width:13px;height:13px;border:1px solid #adadad;border-radius:3px;background:#fff"></div>
<div class="edit" style="left:1007px;top:487px;width:100px;height:20px;"></div>
<div class="t" style="left:1013px;top:490px;font-size:11px;;letter-spacing:-0.02px;">100.0 %</div>
<div class="" style="left:1092px;top:488px;width:1px;height:18px;background:#c8c8c8"></div>
<svg class="i" style="left:1094.5px;top:492.0px" width="10" height="10" viewBox="0 0 16 16"><path d="M2.500 6.500L8 1.800l5.500 4.700z" fill="#b8b8b8"/><path d="M2.500 9.500L8 14.200l5.500-4.700z" fill="#555"/></svg>
<svg class="i" style="left:1116px;top:489px" width="24" height="16" viewBox="0 0 24 16"><path d="M0.200 7.800L5.500 3v9.600z" fill="#8c8c8c"/><rect x="5.500" y="0.500" width="12.300" height="14.800" fill="#fff" stroke="#6e6e6e" stroke-width="1"/><path d="M5.500 7.900h12.300" stroke="#6e6e6e" stroke-width="1"/><path d="M8 4.100h7.500" stroke="#555" stroke-width="1.700"/><path d="M8 11.400h7.500" stroke="#555" stroke-width="1"/><path d="M16.400 11.800h6.600l-3.300 3.800z" fill="#444"/></svg>
<div class="edit" style="left:839px;top:528px;width:274px;height:22px;"></div>
<svg class="i" style="left:850.0px;top:533.5px" width="12" height="12" viewBox="0 0 16 16"><circle cx="6.3" cy="6.3" r="4.8" fill="none" stroke="#999" stroke-width="1.3"/><path d="M9.8 9.8L15 15" stroke="#999" stroke-width="1.6"/></svg>
<div class="t" style="left:868px;top:532px;;letter-spacing:-0.45px;">Favorites</div>
<svg class="i" style="left:1070.5px;top:533.0px" width="13" height="13" viewBox="0 0 16 16"><path d="M.8 8l4.5-5.5H15.2V13.5H5.3z" fill="#aaa"/><path d="M7.5 5.5l5 5M12.5 5.5l-5 5" stroke="#fff" stroke-width="1.4"/></svg>
<div class="" style="left:1092px;top:529px;width:1px;height:20px;background:#c8c8c8"></div>
<svg class="i" style="left:1098px;top:537px" width="8" height="5" viewBox="0 0 8 5"><path d="M0.5 0.5h7L4 4.2z" fill="#444"/></svg>
<svg class="i" style="left:1123.0px;top:531.0px" width="16" height="16" viewBox="0 0 16 16"><circle cx="4.2" cy="4" r="3" fill="#d35f2f"/><rect x="1.3" y="9" width="5.6" height="5.8" rx=".8" fill="#6fae6c"/><path d="M9.5 6.2L14.3 1.4" stroke="#3c6fad" stroke-width="2"/><text x="9.6" y="14.6" font-family="Liberation Serif" font-size="10" fill="#555">a</text></svg>
<div class="" style="left:839px;top:555px;width:304px;height:230px;background:#fff;border:1px solid #a6a6a6"></div>
<div class="" style="left:839px;top:791px;width:24px;height:23px;border:1px solid #a8a8a8;border-radius:3px;background:#dcdcdc"></div>
<svg class="i" style="left:844.0px;top:795.5px" width="14" height="14" viewBox="0 0 16 16"><path d="M1.5 1.5h3.4v3.4H1.5zM6.3 1.5h3.4v3.4H6.3zM11.1 1.5h3.4v3.4h-3.4zM1.5 6.3h3.4v3.4H1.5zM6.3 6.3h3.4v3.4H6.3zM11.1 6.3h3.4v3.4h-3.4zM1.5 11.1h3.4v3.4H1.5zM6.3 11.1h3.4v3.4H6.3zM11.1 11.1h3.4v3.4h-3.4z" fill="#6a9bd8"/><rect x=".5" y=".5" width="15" height="15" fill="none" stroke="#a9c4e6" stroke-width=".8"/></svg>
<svg class="i" style="left:868.0px;top:795.5px" width="14" height="14" viewBox="0 0 16 16"><rect x="1" y="1" width="14" height="14" fill="#dbe7f7" stroke="#8fb1dc" stroke-width=".9"/><rect x="1.5" y="1.5" width="13" height="2.6" fill="#6f9fd8"/><path d="M2.5 6.5h2M6 6.5h7.5M2.5 9h2M6 9h7.5M2.5 11.5h2M6 11.5h7.5" stroke="#8fb1dc" stroke-width="1.1"/></svg>
<div class="btn" style="left:1060px;top:792px;width:83px;height:22px;"></div>
<div class="t" style="left:1063.3px;top:796px;;letter-spacing:-0.55px;">Save Settings...</div>
<div class="btn" style="left:839px;top:820px;width:24px;height:24px;"></div>
<svg class="i" style="left:844.0px;top:825.0px" width="14" height="14" viewBox="0 0 16 16"><path d="M1.5 6L7 1v3c4 0 7 2 7 5.5 0 2.5-1.8 4.3-4.5 4.8v-2.6c1.3-.4 2-1.2 2-2.3C11.5 7.8 10 7 7 7v3.5z" fill="#e8772e"/></svg>
<div class="btn" style="left:869px;top:820px;width:24px;height:24px;"></div>
<svg class="i" style="left:874.0px;top:825.0px" width="14" height="14" viewBox="0 0 16 16"><path d="M14.5 6L9 1v3C5 4 2 6 2 9.5c0 2.5 1.8 4.3 4.5 4.8v-2.6c-1.3-.4-2-1.2-2-2.3C4.5 7.8 6 7 9 7v3.5z" fill="#6fae6c"/></svg>
<div class="cb" style="left:983px;top:825px"><svg class="i" style="left:0;top:0" width="11" height="11" viewBox="0 0 11 11"><path d="M2 5.500L4.500 8.500L9 2" stroke="#000" stroke-width="1.600" fill="none"/></svg></div>
<div class="t" style="left:1000.3px;top:825px;;letter-spacing:-0.58px;">Live update</div>
<div class="btn" style="left:1069px;top:821px;width:80px;height:22px;"></div>
<div class="t" style="left:1094.8px;top:825px;;letter-spacing:-0.84px;">Apply</div>
<div class="edit" style="left:5px;top:849px;width:201px;height:22px;"></div>
<svg class="i" style="left:13.5px;top:854.0px" width="13" height="13" viewBox="0 0 16 16"><circle cx="6.3" cy="6.3" r="4.8" fill="none" stroke="#999" stroke-width="1.3"/><path d="M9.8 9.8L15 15" stroke="#999" stroke-width="1.6"/></svg>
<div class="t" style="left:33.5px;top:853px;color:#8a8a8a;letter-spacing:-0.40px;">Type to locate (Ctrl+K)</div>
<div class="t" style="left:324.9px;top:853px;;letter-spacing:-0.67px;">Coordinate</div>
<div class="edit" style="left:381px;top:850px;width:103px;height:22px;"></div>
<div class="t" style="left:388.4px;top:853px;font-size:11px;;letter-spacing:0.00px;">20.5409,-33.9529</div>
<svg class="i" style="left:488.0px;top:852.0px" width="16" height="16" viewBox="0 0 16 16"><path d="M3 3c2-2 6-2 8 1l2 5c1 3-1 5-3.5 5.5S4 13.5 3 10.5z" fill="#fff" stroke="#333" stroke-width="1"/><path d="M2 2l10 11M12 3L4 13M7 1.5v5" stroke="#333" stroke-width=".9"/><circle cx="11" cy="11.5" r="2" fill="#fff" stroke="#333" stroke-width=".8"/></svg>
<div class="t" style="left:516.4px;top:853px;;letter-spacing:-1.12px;">Scale</div>
<div class="edit" style="left:545px;top:850px;width:81px;height:22px;"></div>
<div class="t" style="left:552.5px;top:853px;font-size:11px;;letter-spacing:-0.26px;">1:59610</div>
<div class="" style="left:604px;top:851px;width:1px;height:20px;background:#c8c8c8"></div>
<svg class="i" style="left:611px;top:858px" width="8" height="5" viewBox="0 0 8 5"><path d="M0.5 0.5h7L4 4.2z" fill="#444"/></svg>
<svg class="i" style="left:637.0px;top:853.0px" width="14" height="14" viewBox="0 0 16 16"><path d="M4.5 7.5V5a3.5 3.5 0 0 1 7 0v2.5" fill="none" stroke="#8c8c8c" stroke-width="1.6"/><rect x="2.5" y="7.2" width="11" height="8" rx="1.3" fill="#6e6e6e"/></svg>
<div class="t" style="left:658.4px;top:853px;;letter-spacing:-0.74px;">Magnifier</div>
<div class="edit" style="left:707px;top:850px;width:87px;height:22px;"></div>
<div class="t" style="left:712.6px;top:853px;font-size:11px;;letter-spacing:-0.29px;">100%</div>
<div class="" style="left:779px;top:851px;width:1px;height:20px;background:#c8c8c8"></div>
<svg class="i" style="left:781.5px;top:855.5px" width="10" height="10" viewBox="0 0 16 16"><path d="M2.5 6.5L8 1.8l5.5 4.7zM2.5 9.5L8 14.2l5.5-4.7z" fill="#555"/></svg>
<div class="t" style="left:802px;top:853px;;letter-spacing:-0.47px;">Rotation</div>
<div class="edit" style="left:853px;top:850px;width:85px;height:22px;"></div>
<div class="t" style="left:857.7px;top:853px;font-size:11px;;letter-spacing:0.30px;">0.0 &deg;</div>
<div class="" style="left:923px;top:851px;width:1px;height:20px;background:#c8c8c8"></div>
<svg class="i" style="left:925.5px;top:855.5px" width="10" height="10" viewBox="0 0 16 16"><path d="M2.5 6.5L8 1.8l5.5 4.7zM2.5 9.5L8 14.2l5.5-4.7z" fill="#555"/></svg>
<div class="cb" style="left:944px;top:853px"><svg class="i" style="left:0;top:0" width="11" height="11" viewBox="0 0 11 11"><path d="M2 5.500L4.500 8.500L9 2" stroke="#000" stroke-width="1.600" fill="none"/></svg></div>
<div class="t" style="left:961.6px;top:853px;;letter-spacing:-0.94px;">Render</div>
<svg class="i" style="left:1013.5px;top:852.5px" width="15" height="15" viewBox="0 0 16 16"><circle cx="8" cy="8.5" r="6.2" fill="#fff" stroke="#555" stroke-width=".9"/><ellipse cx="8" cy="8.5" rx="2.8" ry="6.2" fill="none" stroke="#555" stroke-width=".7"/><path d="M1.8 8.5h12.4M3 5.2h10M3 11.8h10M8 2.3v12.4" stroke="#555" stroke-width=".7"/><path d="M1 4.5L8 .8l7 3.7" fill="none" stroke="#555" stroke-width="1"/></svg>
<div class="t" style="left:1033.4px;top:853px;;letter-spacing:-1.19px;">EPSG:4326</div>
<svg class="i" style="left:1106.0px;top:852.5px" width="16" height="16" viewBox="0 0 16 16"><path d="M8 1.5c4 0 7.2 2.3 7.2 5.5S12 12.5 8 12.5c-.5 0-1 0-1.5-.1L3 15l.8-3.6C2 10.4.8 8.8.8 7 .8 3.8 4 1.5 8 1.5z" fill="#595959"/><circle cx="4.8" cy="7" r="1" fill="#fff"/><circle cx="8" cy="7" r="1" fill="#fff"/><circle cx="11.2" cy="7" r="1" fill="#fff"/></svg>
<svg class="i" style="left:1140px;top:862px" width="10" height="10" viewBox="0 0 10 10" fill="#b0b0b0"><rect x="9" y="0" width="1" height="1"/><rect x="6" y="3" width="1" height="1"/><rect x="9" y="3" width="1" height="1"/><rect x="3" y="6" width="1" height="1"/><rect x="6" y="6" width="1" height="1"/><rect x="9" y="6" width="1" height="1"/><rect x="0" y="9" width="1" height="1"/><rect x="3" y="9" width="1" height="1"/><rect x="6" y="9" width="1" height="1"/><rect x="9" y="9" width="1" height="1"/></svg>
<div class="" style="left:1px;top:31px;width:1px;height:843px;background:#f8f8f8"></div>
<div class="" style="left:1151px;top:31px;width:1px;height:843px;background:#f8f8f8"></div>
<div class="" style="left:1px;top:873px;width:1151px;height:1px;background:#f8f8f8"></div>
<div class="" style="left:0px;top:0px;width:1153px;height:1px;background:#000"></div>
<div class="" style="left:0px;top:0px;width:1px;height:875px;background:#000"></div>
<div class="" style="left:1152px;top:1px;width:1px;height:874px;background:#6c6c6c"></div>
<div class="" style="left:0px;top:874px;width:1153px;height:1px;background:#1b2b3b"></div>
</body></html>
